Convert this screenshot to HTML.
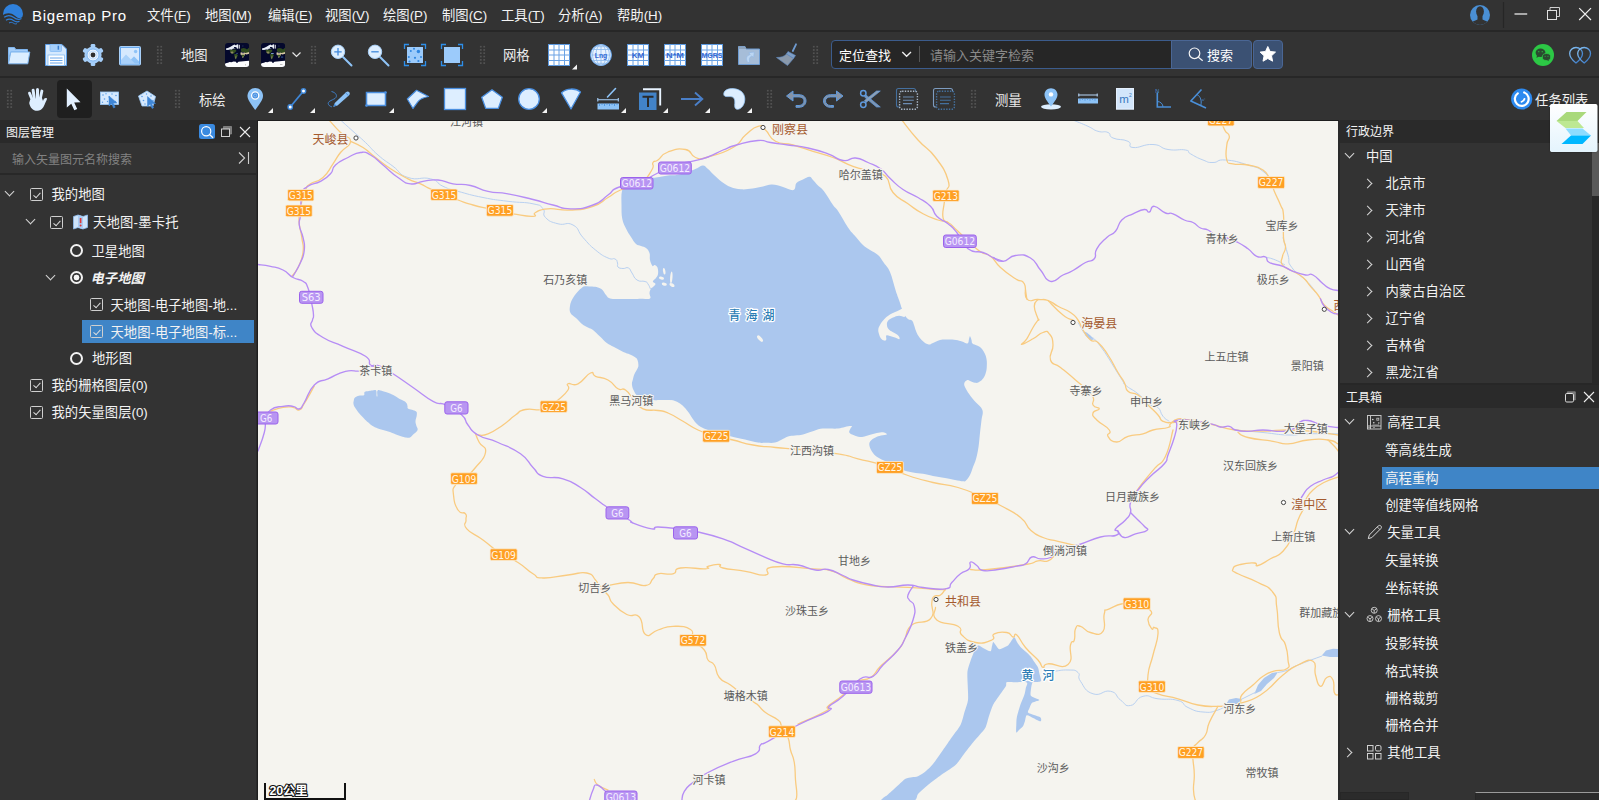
<!DOCTYPE html>
<html lang="zh-CN">
<head>
<meta charset="utf-8">
<title>Bigemap Pro</title>
<style>
*{box-sizing:border-box;margin:0;padding:0}
html,body{width:1599px;height:800px;overflow:hidden;background:#333;}
body{position:relative;font-family:"Liberation Sans","Noto Sans CJK SC",sans-serif;font-size:13px;color:#f2f2f2;}
.abs{position:absolute}
.t{position:absolute;white-space:nowrap;line-height:20px;height:20px;margin-top:-9px}
.sep{position:absolute;left:0;width:1599px;height:2px;background:#272727}
.menu .t{font-size:13.33px;color:#f4f4f4}
.menu u{text-decoration-thickness:1px;text-underline-offset:2px}
.grip{position:absolute;width:7px;height:19.8px;margin-left:-.75px;margin-top:-1.2px;background-image:radial-gradient(circle at center,#626262 0.45px,transparent 0.9px);background-size:3.5px 3.3px}
.lbl{font-size:13.33px;color:#eee}
svg{position:absolute;overflow:visible}
.hdr{position:absolute;background:#2a2a2a;height:21px}
.hdr .t{font-size:12px;color:#f4f4f4}
.tree .t{font-size:13.33px;color:#f2f2f2}
.cb{position:absolute;width:13px;height:13px;border:1px solid #cfcfcf;border-radius:1.5px;margin-top:-7px}
.cb:after{content:"";position:absolute;left:4px;top:1.8px;width:3.2px;height:5.8px;border:solid #dedede;border-width:0 1.1px 1.1px 0;transform:rotate(42deg)}
.rd{position:absolute;width:13px;height:13px;border:2px solid #f2f2f2;border-radius:50%;margin-top:-6.5px}
.rd.on{background:radial-gradient(circle at center,#f6f6f6 2.6px,transparent 3.2px)}
.chv{position:absolute;width:7px;height:7px;border:solid #d6d6d6;border-width:0 1.4px 1.4px 0}
.chv.d{transform:rotate(45deg);margin-top:-6px}
.chv.r{transform:rotate(-45deg);margin-top:-4px}
</style>
</head>
<body>
<!-- TITLE BAR -->
<div class="abs" id="titlebar" style="left:0;top:0;width:1599px;height:30px;background:#333"></div>
<div class="sep" style="top:30px"></div>
<div class="sep" style="top:76px"></div>
<div class="t" style="left:32px;top:15px;font-size:15px;color:#fff;letter-spacing:.75px">Bigemap Pro</div>
<div class="menu">
<div class="t" style="left:147px;top:15px">文件(<u>F</u>)</div>
<div class="t" style="left:205px;top:15px">地图(<u>M</u>)</div>
<div class="t" style="left:268px;top:15px">编辑(<u>E</u>)</div>
<div class="t" style="left:325px;top:15px">视图(<u>V</u>)</div>
<div class="t" style="left:383px;top:15px">绘图(<u>P</u>)</div>
<div class="t" style="left:442px;top:15px">制图(<u>C</u>)</div>
<div class="t" style="left:501px;top:15px">工具(<u>T</u>)</div>
<div class="t" style="left:558px;top:15px">分析(<u>A</u>)</div>
<div class="t" style="left:617px;top:15px">帮助(<u>H</u>)</div>
</div>
<!--TITLE-ICONS-->
<!-- TOOLBAR 1 -->
<div class="grip" style="left:157px;top:46px"></div>
<div class="grip" style="left:311px;top:46px"></div>
<div class="grip" style="left:480px;top:46px"></div>
<div class="grip" style="left:813px;top:46px"></div>
<div class="t lbl" style="left:181px;top:55px">地图</div>
<div class="t lbl" style="left:503px;top:55px">网格</div>
<!-- search -->
<div class="abs" style="left:831px;top:40px;width:421px;height:29px;border:1px solid #3c5c8c;border-radius:4px;background:#262626"></div>
<div class="abs" style="left:1171px;top:40px;width:81px;height:29px;border:1px solid #4a6694;border-radius:0 4px 4px 0;background:#3b5173"></div>
<div class="abs" style="left:1253px;top:40px;width:30px;height:29px;border:1px solid #4a6694;border-radius:4px;background:#3b5173"></div>
<div class="abs" style="left:919px;top:46px;width:1px;height:16px;background:#555"></div>
<div class="t" style="left:839px;top:55px;font-size:13px;color:#fff">定位查找</div>
<div class="t" style="left:930px;top:55px;font-size:13px;color:#8a8a8a">请输入关键字检索</div>
<div class="t" style="left:1207px;top:55px;font-size:13px;color:#fff">搜索</div>
<svg width="1599" height="121" viewBox="0 0 1599 121" style="left:0;top:0" font-family="Liberation Sans, sans-serif">
<defs>
<g id="tri"><path d="M5 0V5H0Z" fill="#f4f4f4"/></g>
<g id="gridic"><rect x="0.5" y="0.5" width="21" height="21" fill="#fdfeff" stroke="#5b98de" stroke-width="1"/><path d="M6 0V22M11 0V22M16.500 0V22M0 6H22M0 11H22M0 16.500H22" stroke="#6aa2e4" stroke-width="1" fill="none"/></g>
</defs>
<!-- logo -->
<circle cx="13" cy="14" r="10" fill="#2f80db"/>
<path d="M2.500 15.500C6 12.500 11 12.500 14.500 15.500S20 19 23 16.500L23.500 22L13 25.500L2 22Z" fill="#333"/>
<path d="M4.200 17.200C7.500 15 10.500 15 13.500 17.300S19 20 21.500 18.500" stroke="#2f80db" stroke-width="1.200" fill="none"/>
<path d="M6 20.300C8.500 18.600 11 18.800 13.500 20.500S17.500 22.300 19.500 21.300" stroke="#2f80db" stroke-width="1.100" fill="none"/>
<path d="M9 23C10.500 22 12 22.200 13.500 23.200S16 24 17 23.600" stroke="#2f80db" stroke-width="1" fill="none"/>
<!-- folder -->
<path d="M8.500 47.500H14.500L15.800 49.500H27.500V52H10.500L8.500 63Z" fill="#a4cdf8" stroke="#7fb5ee" stroke-width="1" stroke-linejoin="round"/>
<path d="M10.800 52H29.800L27.800 63.800H8.500Z" fill="#dceeff" stroke="#7fb5ee" stroke-width="1" stroke-linejoin="round"/>
<!-- save -->
<path d="M45.500 44.500H62L66.500 49V65.500H45.500Z" fill="#d5e9fe" stroke="#5e9fe8" stroke-width="1" stroke-linejoin="round"/>
<rect x="50" y="44.500" width="11.500" height="7" rx="1" fill="#a6cffa" stroke="#86bdf5" stroke-width=".8"/>
<rect x="57.600" y="45.700" width="1.500" height="4" fill="#3b7fd0"/>
<rect x="48" y="55" width="16.500" height="10.500" fill="#ffffff" stroke="#86bdf5" stroke-width=".8"/>
<path d="M50 58H62.500M50 60.500H62.500M50 63H62.500" stroke="#6aa6ea" stroke-width="1"/>
<!-- gear -->
<g transform="translate(93 55)">
<g fill="#a5cef9"><circle r="8.600"/>
<rect x="-2.300" y="-11" width="4.600" height="4.500" rx="1.300"/>
<rect x="-2.300" y="-11" width="4.600" height="4.500" rx="1.300" transform="rotate(60)"/>
<rect x="-2.300" y="-11" width="4.600" height="4.500" rx="1.300" transform="rotate(120)"/>
<rect x="-2.300" y="-11" width="4.600" height="4.500" rx="1.300" transform="rotate(180)"/>
<rect x="-2.300" y="-11" width="4.600" height="4.500" rx="1.300" transform="rotate(240)"/>
<rect x="-2.300" y="-11" width="4.600" height="4.500" rx="1.300" transform="rotate(300)"/></g>
<circle r="6" fill="#e6f2ff" stroke="#7db4f0" stroke-width=".9"/><circle r="4" fill="none" stroke="#b9d9fb" stroke-width=".8"/><circle r="2.400" fill="#2e2e2e"/>
</g>
<!-- image -->
<rect x="119.500" y="46.500" width="21" height="18.500" rx="1" fill="#69a9ee" stroke="#a9d0f8" stroke-width="1"/>
<rect x="121" y="48" width="18" height="15.500" fill="#d6e9fe"/>
<path d="M121 60L126 54.500L131 59.500L134 56.500L139 61.500V63.500H121Z" fill="#a9d1fa"/>
<path d="M131 59.500L134 56.500L139 61.500V63.500H135Z" fill="#8fc3f7"/>
<circle cx="135.600" cy="51.500" r="1.700" fill="#8fc3f7"/>
<!-- map thumbs -->
<g id="thumbs">
<defs><g id="thumb"><rect x="0" y="0" width="24.200" height="24" fill="#04082c"/>
<path d="M1 5.500L3.500 4.800L5.500 3.800L7.500 2.500L9.500 1.500L11 2.500L12 1.200L13.200 1.500V5.500L12 5.800L11.500 4.200L10.500 4.500L10 6L8 5.500L7 6.800L5 6.500L3 7L1 6.800Z" fill="#e9eef6"/>
<rect x="13.800" y="1.800" width=".9" height="3.800" fill="#fff"/><rect x="9" y="4" width="2" height="1.600" fill="#0b1238"/>
<path d="M4.500 7L7 6.800L10.500 6.500L11.500 8L10 9.200L9 10.500L7.500 10.800L6.500 10L5.500 9Z" fill="#35501f"/><path d="M5.200 8.800L8 8.500L8.500 10L7 10.800L5.800 10Z" fill="#8d8a5e"/>
<path d="M9.200 11.300L11.500 11L12.800 12L12.300 13.500L11.500 15L10.800 16.500L10 15.500L9.500 13.500Z" fill="#3a5a22"/><path d="M10 13.500L11.600 13.200L11 16L10.300 15.500Z" fill="#7d7c58"/>
<path d="M16 5.800L18.500 5L20.500 5.500L22 6.500L24.200 4.500V10L21 10.500L19.500 9.500L17 9.800L16 8Z" fill="#2f4a1e"/>
<path d="M15.500 9.500L18.500 9.300L20.500 10L24.200 9V10.800L21.500 11.500L20 11L19.800 12L18.500 14L17.500 14.500L17 12.500L15.500 11.500Z" fill="#d7c7a4"/><path d="M16.300 11.700L19.800 11.800L19 13.600L18.200 14.500L17.500 14.500L17 13Z" fill="#3a5a22"/><path d="M17.500 13.800L18.600 13.600L18 14.800L17.600 14.600Z" fill="#e0c8a8"/>
<rect x="17" y="9.300" width="2" height=".9" fill="#1a2048"/><rect x="11.300" y="10.200" width="1.500" height=".7" fill="#4a6aa0"/><rect x="17" y="2.500" width="1.600" height="1" fill="#1d2a55"/>
<path d="M0 20.800L1.500 20L3 19.800L4.500 19L6.500 19.300L8.500 18.500L11 18.800L11.500 20L12.500 19.800L13.500 18.800L16 18.500L18.500 18.300L21 18L24.200 17.800V24H0Z" fill="#fcfdfe"/>
</g></defs>
<clipPath id="tc1"><rect x="225" y="43" width="24.200" height="24" rx="3"/></clipPath>
<g clip-path="url(#tc1)"><use href="#thumb" x="225" y="43"/><rect x="245" y="64" width=".6" height="1.500" fill="#b8b8a8"/></g>
<clipPath id="tc2"><rect x="261" y="43" width="24.200" height="24" rx="3"/></clipPath>
<g clip-path="url(#tc2)"><use href="#thumb" x="261" y="43"/><rect x="271" y="53" width="2.500" height=".8" fill="#8fb0e0"/><rect x="281" y="56.500" width="2.200" height="1.200" fill="#2c4a85"/><rect x="280" y="64" width="2.500" height=".6" fill="#999"/></g>
</g>
<path d="M292.500 52.500L296.500 56.500L300.500 52.500" stroke="#e6e6e6" stroke-width="1.200" fill="none"/>
<!-- zoom in/out -->
<path d="M343 57L351.500 65.500" stroke="#8fc4f7" stroke-width="2" stroke-linecap="round"/>
<circle cx="338" cy="51.800" r="6.700" fill="#ddeeff" stroke="#a9d1f9" stroke-width="1"/>
<path d="M334.300 51.800H341.700M338 48.100V55.500" stroke="#3f88dc" stroke-width="1.300"/>
<path d="M380 57L388.500 65.500" stroke="#8fc4f7" stroke-width="2" stroke-linecap="round"/>
<circle cx="375" cy="51.800" r="6.700" fill="#ddeeff" stroke="#a9d1f9" stroke-width="1"/>
<path d="M371.300 51.800H378.700" stroke="#3f88dc" stroke-width="1.300"/>
<!-- fit dots -->
<rect x="407" y="47" width="16" height="16" fill="#9ccbfb"/>
<path d="M404.500 49V44.500H409M421 44.500H425.500V49M425.500 61V65.500H421M409 65.500H404.500V61" stroke="#2d8fea" stroke-width="1.300" fill="none"/>
<g fill="#2f86e0"><circle cx="418.400" cy="51.500" r="1.700"/><circle cx="414" cy="48.800" r="1"/><circle cx="410.800" cy="51" r="1"/><circle cx="408.800" cy="57" r="1"/><circle cx="415" cy="57.800" r="1.100"/><circle cx="421" cy="57" r="1"/><circle cx="418.400" cy="61" r="1.100"/><circle cx="409.500" cy="61.500" r="1.100"/></g>
<!-- fit square -->
<rect x="444" y="47" width="16" height="16" fill="#9ccbfb"/>
<path d="M441.500 49V44.500H446M458 44.500H462.500V49M462.500 61V65.500H458M446 65.500H441.500V61" stroke="#2d8fea" stroke-width="1.300" fill="none"/>
<!-- grids -->
<use href="#gridic" x="548" y="44"/><use href="#tri" x="572" y="64.500"/>
<circle cx="601" cy="55" r="10.500" fill="#e9f3ff" stroke="#5b98de" stroke-width="1"/>
<g stroke="#8dbaee" stroke-width=".8" fill="none"><ellipse cx="601" cy="55" rx="5" ry="10.500"/><ellipse cx="601" cy="55" rx="8.500" ry="10.500"/><path d="M601 44.500V65.500M590.500 55H611.500M592 49.500H610M592 60.500H610M595 46.700H607M595 63.300H607"/></g>
<text x="601" y="57.800" font-size="7.500" font-weight="bold" fill="#3268d4" text-anchor="middle" textLength="12.500" lengthAdjust="spacingAndGlyphs">Lng</text>
<use href="#gridic" x="627" y="44"/><text x="638" y="58" font-size="8" fill="#3268d4" text-anchor="middle" textLength="12.5" lengthAdjust="spacingAndGlyphs" font-weight="bold">KM</text>
<use href="#gridic" x="664" y="44"/><text x="675" y="58" font-size="8" fill="#3268d4" text-anchor="middle" textLength="18" lengthAdjust="spacingAndGlyphs" font-weight="bold">N*M</text>
<use href="#gridic" x="701" y="44"/><text x="712" y="58" font-size="7.500" fill="#3268d4" text-anchor="middle" textLength="21" lengthAdjust="spacingAndGlyphs" font-weight="bold">MGRS</text>
<!-- folder arrow disabled -->
<path d="M738.500 46.500H745L746 49H759.500V64.500H738.500Z" fill="#a6bdd8" stroke="#6e9cd2" stroke-width="1" stroke-linejoin="round"/>
<path d="M738.500 46.500H745L746 49H738.500Z" fill="#8ea4bd"/>
<path d="M747.800 62.500C745.300 58.500 746.800 55.300 750.200 54.600L748.900 52.700L754.200 52.100L753.600 57.400L751.900 55.900C749.600 56.800 748.700 59 749.700 62Z" fill="#bcd6f2" stroke="#8db5e4" stroke-width=".5"/>
<!-- broom disabled -->
<path d="M792.800 51L796 44.300" stroke="#6f9bd0" stroke-width="1.800" stroke-linecap="round"/>
<path d="M788 51.500L795.500 55.500L793.500 58.500L786.500 54Z" fill="#7f9fc6" stroke="#5d8cc8" stroke-width=".6"/>
<path d="M786.500 54L793.500 58.500L787.500 65.500L776.500 57.500C781 57.500 784.500 56.500 786.500 54Z" fill="#8a99ab" stroke="#5d8cc8" stroke-width=".6"/>
<!-- search icons -->
<path d="M902.300 52L906.600 56.300L911 52" stroke="#f0f0f0" stroke-width="1.300" fill="none"/>
<circle cx="1194.500" cy="53.300" r="5.300" fill="none" stroke="#f4f4f4" stroke-width="1.200"/><path d="M1198.400 57.200L1202.700 60.800" stroke="#f4f4f4" stroke-width="1.200"/>
<path d="M1267.800 46.500L1270.100 51.500L1275.500 52.100L1271.500 55.800L1272.600 61.200L1267.800 58.500L1263 61.200L1264.100 55.800L1260.100 52.100L1265.500 51.500Z" fill="#fff" stroke="#fff" stroke-width="1" stroke-linejoin="round"/>
<!-- title right -->
<circle cx="1480" cy="15" r="10" fill="#4a8fd4"/>
<clipPath id="uc"><circle cx="1480" cy="15" r="10"/></clipPath>
<g clip-path="url(#uc)" fill="#333"><ellipse cx="1480" cy="11.500" rx="3.900" ry="5.300"/><path d="M1477.500 15H1482.500V19.500C1485.500 21 1488 21.500 1489.500 23.500V27H1470.500V23.500C1472 21.500 1474.500 21 1477.500 19.500Z"/></g>
<path d="M1503.500 2V28" stroke="#262626" stroke-width="1.200"/>
<path d="M1514.500 14H1527.200" stroke="#dcdcdc" stroke-width="1.400"/>
<path d="M1550 10.500V7.500H1559.500V16.500H1556.500" stroke="#cfcfcf" stroke-width="1" fill="none"/><rect x="1547.500" y="10.500" width="9" height="9" stroke="#e0e0e0" stroke-width="1" fill="none"/>
<path d="M1579.200 8.200L1591 20M1591 8.200L1579.200 20" stroke="#efefef" stroke-width="1.200"/>
<!-- wechat -->
<circle cx="1543" cy="55" r="11" fill="#2cc845"/>
<g fill="#2b4a30"><ellipse cx="1540.500" cy="52.800" rx="4.900" ry="4.200"/><path d="M1537 55L1536.500 58L1539.500 56Z"/><ellipse cx="1546.500" cy="57" rx="4.200" ry="3.500" stroke="#2cc845" stroke-width=".8"/><path d="M1548 59L1549 61.300L1546.500 59.800Z"/></g>
<g fill="#2cc845"><circle cx="1538.800" cy="51.700" r=".6"/><circle cx="1542.200" cy="51.700" r=".6"/><circle cx="1545.100" cy="56.200" r=".5"/><circle cx="1548" cy="56.200" r=".5"/></g>
<!-- hearts -->
<defs><linearGradient id="hg" x1="0" y1="0" x2="1" y2="1"><stop offset="0" stop-color="#8cc8fa"/><stop offset="1" stop-color="#2f6fc0"/></linearGradient></defs>
<path d="M1576 63C1571.500 59.500 1569.700 56.500 1569.700 53.500C1569.700 50 1572.500 47.500 1576 47.500C1580 47.500 1582.500 50.500 1582.500 53.500C1582.500 56.500 1580.500 59.500 1576 63Z" fill="none" stroke="url(#hg)" stroke-width="1.300"/>
<path d="M1584.200 63C1579.700 59.500 1577.700 56.500 1577.700 53.500C1577.700 50.500 1580.200 47.500 1584.200 47.500C1587.700 47.500 1590.500 50 1590.500 53.500C1590.500 56.500 1588.700 59.500 1584.200 63Z" fill="none" stroke="url(#hg)" stroke-width="1.300"/>
</svg>

<!-- TOOLBAR 2 -->
<div class="abs" style="left:57px;top:80px;width:35px;height:38px;border-radius:4px;background:#1f1f1f"></div>
<div class="grip" style="left:7px;top:90px"></div>
<div class="grip" style="left:175px;top:90px"></div>
<div class="grip" style="left:767px;top:90px"></div>
<div class="grip" style="left:971px;top:90px"></div>
<div class="t lbl" style="left:199px;top:100px">标绘</div>
<div class="t lbl" style="left:995px;top:100px">测量</div>
<div class="t" style="left:1535px;top:100px;font-size:13.33px;color:#f2f2f2">任务列表</div>
<svg width="1599" height="160" viewBox="0 0 1599 160" style="left:0;top:0" font-family="Liberation Sans, sans-serif">
<defs><g id="tri2"><path d="M5 0V5H0Z" fill="#f4f4f4"/></g></defs>
<!-- hand -->
<g fill="#ddeeff" stroke="none">
<rect x="29.400" y="91.500" width="2.900" height="10" rx="1.450" transform="rotate(-22 30.800 96.500)"/>
<rect x="32.300" y="88.800" width="3" height="12" rx="1.500" transform="rotate(-8 33.800 95)"/>
<rect x="36" y="88" width="3" height="12" rx="1.500"/>
<rect x="39.600" y="89.500" width="2.900" height="11" rx="1.450" transform="rotate(12 41 95)"/>
<path d="M30.200 99.500L41.800 97.500L43 101C43.500 99 45 97.500 46.800 98.200C47.500 99 46 101 45 103.500C43.800 107 42 110.500 37.500 110.800C33 111 30 107.500 29.200 103Z"/>
</g>
<!-- arrow cursor -->
<path d="M66.800 88.600V107.600L71.300 103.700L74.300 110.300L77.200 109L74.200 102.600L80.500 102.200Z" fill="#e2f0ff"/>
<!-- rect select -->
<rect x="100.500" y="92" width="18" height="12.500" fill="#d6e9fe" stroke="#9ccbfb" stroke-width=".8"/>
<g fill="#5a9de6"><circle cx="103" cy="95" r=".8"/><circle cx="106" cy="93.800" r=".7"/><circle cx="104.500" cy="99" r=".8"/><circle cx="109" cy="97" r=".7"/><circle cx="102.500" cy="102.300" r=".7"/><circle cx="112" cy="94" r=".7"/><circle cx="116" cy="95.500" r=".8"/><circle cx="107.500" cy="101.500" r=".7"/><circle cx="115.500" cy="101.500" r=".7"/></g>
<path d="M109 96V106L111.600 103.800L113.600 108L115.200 107.200L113.200 103.200L117 103Z" fill="#3f86d6" stroke="#3f86d6" stroke-width=".5"/>
<!-- polygon select -->
<path d="M138.500 96L147 91L155.500 96.500L153 106H142Z" fill="#d6e9fe" stroke="#9ccbfb" stroke-width=".8"/>
<g fill="#5a9de6"><circle cx="142" cy="96.500" r=".8"/><circle cx="146.500" cy="94" r=".7"/><circle cx="151" cy="96" r=".8"/><circle cx="143.500" cy="100.500" r=".8"/><circle cx="145" cy="104" r=".7"/><circle cx="153" cy="100.500" r=".7"/></g>
<path d="M147.500 96.500V106.500L150.100 104.300L152.100 108.500L153.700 107.700L151.700 103.700L155.500 103.500Z" fill="#3f86d6" stroke="#3f86d6" stroke-width=".5"/>
<!-- pin -->
<path d="M255.200 110C250 103 247.500 99.500 247.500 95.800C247.500 91.400 251 88 255.200 88C259.500 88 263 91.400 263 95.800C263 99.500 260.500 103 255.200 110Z" fill="#8dc3f7"/>
<circle cx="255.200" cy="95.500" r="3.600" fill="#4a90e0" stroke="#fff" stroke-width="1.300"/><circle cx="255.200" cy="95.500" r="1.500" fill="none" stroke="#9ccbfb" stroke-width=".7"/>
<use href="#tri2" x="268" y="108"/>
<!-- line -->
<path d="M290.200 107L303.500 91" stroke="#3f86d6" stroke-width="1.800"/>
<circle cx="303.500" cy="91" r="2.200" fill="#fff" stroke="#3f86d6" stroke-width="1.400"/><circle cx="290.200" cy="107" r="2.200" fill="#fff" stroke="#3f86d6" stroke-width="1.400"/>
<use href="#tri2" x="310" y="108"/>
<!-- pen -->
<path d="M331.500 91.500C336 92.500 338 96 335 98.500C331.500 100.500 327 101.500 328.500 104.500C329.500 106.500 331.500 106.500 332 107" stroke="#3f86d6" stroke-width=".9" fill="none"/>
<path d="M333.300 106.800L334.800 103L346 92.200C347 91.300 348.500 91.300 349.300 92.200C350 93 350 94.300 349.100 95.200L337.500 105.500Z" fill="#8dc3f7"/>
<path d="M333.300 106.800L334.500 103.800L336.500 105.700Z" fill="#3f86d6"/><path d="M345.500 92.800L348.700 95.800" stroke="#3f86d6" stroke-width=".8"/>
<!-- rect -->
<rect x="366.500" y="92.500" width="19" height="13" fill="#ddeeff" stroke="#4a8fe0" stroke-width="1.500"/><circle cx="385.500" cy="92.500" r="1.300" fill="#4a8fe0"/><circle cx="366.500" cy="105.500" r="1.300" fill="#4a8fe0"/>
<use href="#tri2" x="389" y="108"/>
<!-- kite -->
<path d="M407.300 99L416.500 90.300L428.500 96.500C423 97.500 419.500 99.500 417.800 101.800C416 104 414.500 106.500 413 108.500Z" fill="#ddeeff" stroke="#4a8fe0" stroke-width="1.200" stroke-linejoin="round"/>
<!-- square -->
<rect x="444.500" y="88.500" width="21" height="21" fill="#ddeeff" stroke="#4a8fe0" stroke-width="1.300"/>
<!-- pentagon -->
<path d="M492 89.800L502.300 97.200L498.300 108.400H485.700L481.700 97.200Z" fill="#ddeeff" stroke="#4a8fe0" stroke-width="1.300" stroke-linejoin="round"/>
<!-- circle -->
<circle cx="529" cy="99" r="10.300" fill="#ddeeff" stroke="#4a8fe0" stroke-width="1.300"/>
<use href="#tri2" x="542" y="108"/>
<!-- fan -->
<path d="M571 109L561.500 92.800C566.500 88 575.500 87.800 580.500 92Z" fill="#ddeeff" stroke="#4a8fe0" stroke-width="1.300" stroke-linejoin="round"/>
<!-- ruler measure -->
<path d="M607.500 97L615.500 88.500" stroke="#8dc3f7" stroke-width="1.600" stroke-linecap="round"/>
<path d="M597.500 99.800H618.500M597.800 98V101.600M618.300 98V101.600" stroke="#a9d1fa" stroke-width="1.100"/>
<rect x="597.500" y="103.500" width="21.500" height="6" fill="#8dc3f7"/><path d="M599.500 103.500V106M602 103.500V105M604.500 103.500V106M607 103.500V105M609.500 103.500V106M612 103.500V105M614.500 103.500V106M617 103.500V105" stroke="#3f86d6" stroke-width=".7"/>
<use href="#tri2" x="621" y="108"/>
<!-- T -->
<path d="M643 89.200H660.200V105.500" stroke="#e8f3ff" stroke-width="1.900" fill="none"/>
<rect x="639" y="92.500" width="17.500" height="17.500" fill="#4283c8"/>
<path d="M642.500 96.800H653.500M648 96.800V107" stroke="#2a2a2a" stroke-width="2"/>
<use href="#tri2" x="663" y="108"/>
<!-- arrow -->
<path d="M681 99H702M695 92.500L702.300 99L695 105.500" stroke="#4a7fc8" stroke-width="1.900" fill="none"/>
<use href="#tri2" x="705" y="108"/>
<!-- comma blob -->
<path d="M723.800 94.500C723.500 91 727 88.800 731.500 88.600C739 88.300 744.800 92.500 744.800 99C744.800 105 741 109.300 737.500 109.300C734.800 109.300 734.500 106.500 734.800 103.500C735.200 99.500 734 96.800 730.500 96.600C727.500 96.400 724.200 97.300 723.800 94.500Z" fill="#ddeeff" stroke="#9ccbfb" stroke-width=".8"/>
<use href="#tri2" x="747" y="108"/>
<!-- undo / redo -->
<path d="M786.500 96L793 91V94.700H799C803.500 94.700 806 97.500 806 100.800C806 104.300 803.500 107.300 799 107.300H796V105.500H799C802 105.500 804 103.500 804 100.900C804 98.400 802 96.900 799 96.900H793V101Z" fill="#8794a6" stroke="#5f9ade" stroke-width="1" stroke-linejoin="round"/>
<path d="M843 96L836.500 91V94.700H830.500C826 94.700 823.500 97.500 823.500 100.800C823.500 104.300 826 107.300 830.500 107.300H833.500V105.500H830.500C827.500 105.500 825.500 103.500 825.500 100.900C825.500 98.400 827.500 96.900 830.500 96.900H836.500V101Z" fill="#8794a6" stroke="#5f9ade" stroke-width="1" stroke-linejoin="round"/>
<!-- scissors -->
<path d="M866 95L880.300 107H876.500L864.500 97Z" fill="#7e97b6" stroke="#5f9ade" stroke-width=".7"/>
<path d="M866 102.500L880.300 91H876.500L864.500 100.500Z" fill="#8fa1b6" stroke="#5f9ade" stroke-width=".7"/>
<circle cx="863.300" cy="93.300" r="2.700" fill="none" stroke="#5f9ade" stroke-width="1.500"/><circle cx="863.300" cy="104.800" r="2.700" fill="none" stroke="#5f9ade" stroke-width="1.500"/>
<!-- copy icons -->
<rect x="896.500" y="88.500" width="19" height="18.500" rx="2" fill="none" stroke="#45709f" stroke-width="1.100"/>
<rect x="899.600" y="91.200" width="17.800" height="18" rx="2.500" fill="#333" stroke="#a9b7c8" stroke-width="1.400" stroke-dasharray="1.400 1.300"/>
<path d="M903 97H913.800M903 100.300H913.800M903 103.600H912" stroke="#6d8db3" stroke-width="1.100"/>
<rect x="933.500" y="88.500" width="19" height="18.500" rx="2" fill="none" stroke="#7d9cc0" stroke-width="1.100"/>
<rect x="936.600" y="91.200" width="17.800" height="18" rx="2.500" fill="#333" stroke="#44719f" stroke-width="1.400" stroke-dasharray="1.400 1.300"/>
<path d="M940 97H950.800M940 100.300H950.800M940 103.600H949" stroke="#44719f" stroke-width="1.100"/>
<!-- measure: pin+base -->
<ellipse cx="1051" cy="106.800" rx="10" ry="2.600" fill="#ddeeff"/>
<path d="M1051 106.500C1046.800 101 1044.500 98 1044.500 94.600C1044.500 91 1047.400 88.200 1051 88.200C1054.600 88.200 1057.500 91 1057.500 94.600C1057.500 98 1055.200 101 1051 106.500Z" fill="#8dc3f7"/><circle cx="1051" cy="94.400" r="2.200" fill="#fff"/>
<!-- ruler -->
<path d="M1078.500 95H1097.500M1078.800 93.500V96.500M1097.200 93.500V96.500" stroke="#b9d9fb" stroke-width="1"/>
<rect x="1078" y="98.500" width="20" height="5" fill="#8dc3f7"/><path d="M1080 98.500V100.800M1082.500 98.500V100M1085 98.500V100.800M1087.500 98.500V100M1090 98.500V100.800M1092.500 98.500V100M1095 98.500V100.800" stroke="#3f86d6" stroke-width=".6"/>
<!-- m2 -->
<rect x="1116" y="88" width="18" height="21.500" fill="#d3e6fb"/><rect x="1116.500" y="88.500" width="17" height="20.500" fill="none" stroke="#e6f1fe" stroke-width="1"/>
<text x="1124" y="103" font-size="11.500" fill="#3a78c0" text-anchor="middle">m</text><text x="1130.300" y="96.800" font-size="5" fill="#3a78c0" text-anchor="middle">2</text>
<!-- angle N -->
<path d="M1157.300 92.500V107H1171" stroke="#4a8fd8" stroke-width="1.600" fill="none"/><path d="M1157.300 101.500C1160.500 101.500 1163 104 1163 107" stroke="#4a8fd8" stroke-width="1" fill="none"/>
<text x="1157.300" y="92.500" font-size="5.500" fill="#4a8fd8" text-anchor="middle">N</text>
<!-- angle 2 -->
<path d="M1201.500 89.500L1190.800 101L1206 108" stroke="#4a8fd8" stroke-width="1.600" fill="none" stroke-linejoin="round"/><path d="M1197 94.500C1200.500 96.500 1202 100.500 1200.800 105.500" stroke="#4a8fd8" stroke-width="1" fill="none"/>
<text x="1203.800" y="100.500" font-size="3.500" fill="#4a8fd8" text-anchor="middle">a°</text>
<!-- task -->
<circle cx="1521.700" cy="99" r="10.600" fill="#2d8af0"/>
<path d="M1524.200 92.500A6.900 6.900 0 1 1 1517.800 93.300" stroke="#fff" stroke-width="2.200" fill="none" stroke-linecap="round"/>
<path d="M1521.500 101.800C1523 101.500 1524.200 100.300 1524.500 98.800" stroke="#fff" stroke-width="1.800" fill="none" stroke-linecap="round"/>
</svg>


<!-- LEFT PANEL -->
<div class="abs" id="leftpanel" style="left:0;top:121px;width:258px;height:679px;background:#333"></div>
<div class="hdr" style="left:0;top:120px;width:258px;height:22.5px"><div class="t" style="left:6px;top:12px">图层管理</div></div>
<div class="abs" style="left:0;top:173px;width:256px;height:2px;background:#282828"></div>
<div class="t" style="left:12px;top:158.6px;font-size:12px;color:#828282">输入矢量图元名称搜索</div>
<svg width="258" height="120" viewBox="0 120 258 120" style="left:0;top:120px">
<rect x="199" y="124" width="16" height="15" rx="2.500" fill="#3a8ae0"/>
<circle cx="206.200" cy="131.200" r="4.600" fill="none" stroke="#fff" stroke-width="1.200"/><path d="M209.500 134.500L213 137.800" stroke="#fff" stroke-width="1.200"/>
<path d="M223.500 129V126.500H231.500V134H229.500V129Z" fill="#7a7a7a" stroke="#8a8a8a" stroke-width=".8"/><rect x="221.500" y="129" width="8" height="7.500" fill="#2a2a2a" stroke="#d0d0d0" stroke-width="1"/>
<path d="M240 127L250 137M250 127L240 137" stroke="#ededed" stroke-width="1.100"/>
<path d="M239 152.500L244.600 158L239 163.500M248.500 152V164" stroke="#cfcfcf" stroke-width="1.100" fill="none"/>
<!-- map icon -->
<g>
<path d="M73.500 216.500L78 215L83 216.500L87.500 215V227.500L83 229L78 227.500L73.500 229Z" fill="#cfe4fa" stroke="#8fbdf0" stroke-width=".8" stroke-linejoin="round"/>
<path d="M78 215L83 216.500V229L78 227.500Z" fill="#a8cdf5"/>
<path d="M80.600 218V223.200" stroke="#e03a3a" stroke-width="1.700"/><circle cx="80.600" cy="225.400" r="1" fill="#e03a3a"/>
</g>
</svg>

<div class="tree">
<div class="abs" style="left:82px;top:320px;width:172px;height:23px;background:#3f85c7"></div>
<div class="chv d" style="left:6px;top:194px"></div><div class="cb" style="left:30px;top:195px"></div><div class="t" style="left:51.5px;top:193.8px">我的地图</div>
<div class="chv d" style="left:27px;top:222px"></div><div class="cb" style="left:50px;top:223px"></div><div class="t" style="left:93px;top:222.2px;letter-spacing:.2px">天地图-墨卡托</div>
<div class="rd" style="left:69.5px;top:250px"></div><div class="t" style="left:91.5px;top:250.5px">卫星地图</div>
<div class="chv d" style="left:46.5px;top:277.5px"></div><div class="rd on" style="left:69.5px;top:277px"></div><div class="t" style="left:90.5px;top:277.8px;font-weight:bold;font-style:italic">电子地图</div>
<div class="cb" style="left:90px;top:305px"></div><div class="t" style="left:110.5px;top:304.8px">天地图-电子地图-地...</div>
<div class="cb" style="left:90px;top:332px"></div><div class="t" style="left:110.5px;top:331.8px">天地图-电子地图-标...</div>
<div class="rd" style="left:69.5px;top:358px"></div><div class="t" style="left:92px;top:358px">地形图</div>
<div class="cb" style="left:30px;top:385.5px"></div><div class="t" style="left:51.5px;top:385px">我的栅格图层(0)</div>
<div class="cb" style="left:30px;top:412.5px"></div><div class="t" style="left:51.5px;top:412px">我的矢量图层(0)</div>
</div>

<!-- MAP -->
<div class="abs" id="map" style="left:258px;top:121px;width:1080px;height:679px;background:#f5f4ef;overflow:hidden">
<svg width="1080" height="679" viewBox="0 0 1080 679" style="left:0;top:0" font-family="Liberation Sans, Noto Sans CJK SC, sans-serif">
<g fill="#abc7ee" stroke="none">
<path d="M364.0 70.0C364.9 66.2 366.1 66.6 368.0 65.0C369.9 63.4 369.7 63.4 373.5 62.0C377.3 60.6 382.1 59.1 387.0 58.0C391.9 56.9 393.4 57.2 398.0 56.5C402.6 55.8 405.6 55.0 410.0 54.5C414.4 54.0 415.6 54.7 420.0 53.8C424.4 52.9 428.1 51.4 432.0 50.0C435.9 48.6 437.0 48.0 439.6 46.9C442.2 45.8 442.9 44.3 445.0 44.5C447.1 44.7 447.8 46.1 450.0 48.0C452.2 49.9 453.2 51.4 456.0 54.0C458.8 56.6 460.7 58.6 464.0 61.0C467.3 63.4 468.8 64.5 472.6 66.0C476.4 67.5 478.6 68.0 483.0 68.3C487.4 68.6 490.2 68.1 494.6 67.5C499.0 66.9 501.1 66.3 505.0 65.5C508.9 64.7 510.0 63.5 514.0 63.6C518.0 63.7 520.7 64.9 525.0 66.0C529.3 67.1 532.8 69.8 535.5 69.0C538.2 68.2 536.6 64.1 538.5 62.0C540.4 59.9 542.4 59.7 545.0 58.5C547.6 57.3 549.5 55.7 551.5 55.8C553.5 55.9 553.3 57.3 555.0 59.0C556.7 60.7 557.8 62.2 560.0 64.5C562.2 66.8 563.0 66.4 566.0 70.3C569.0 74.2 572.2 80.1 575.0 84.0C577.8 87.9 577.0 85.5 580.0 90.0C583.0 94.5 586.7 101.6 590.0 106.5C593.3 111.4 593.4 110.8 596.4 114.3C599.4 117.8 601.9 121.1 605.0 124.0C608.1 126.9 609.0 127.0 612.0 129.0C615.0 131.0 617.2 131.4 620.0 134.0C622.8 136.6 623.6 138.6 626.0 142.0C628.4 145.4 629.7 145.6 632.0 151.0C634.3 156.4 635.7 163.4 637.5 169.0C639.3 174.6 639.7 175.2 641.0 179.0C642.3 182.8 643.0 185.2 644.0 188.0C645.0 190.8 644.8 191.0 646.0 193.0C647.2 195.0 648.4 196.7 650.0 198.0C651.6 199.3 652.8 198.4 654.0 199.6C655.2 200.8 655.2 201.9 656.0 204.0C656.8 206.1 657.1 207.8 658.0 210.0C658.9 212.2 659.1 212.9 660.5 215.0C661.9 217.1 663.0 218.6 665.0 220.3C667.0 222.0 668.7 223.2 670.7 223.5C672.7 223.8 672.7 222.9 675.0 222.0C677.3 221.1 679.0 219.7 682.0 219.0C685.0 218.3 686.8 218.5 690.0 218.5C693.2 218.5 695.2 218.6 698.0 219.0C700.8 219.4 701.7 219.8 704.0 220.5C706.3 221.2 708.1 223.0 709.5 222.5C710.9 222.0 710.5 219.5 711.0 218.0C711.5 216.5 711.5 215.0 712.0 215.2C712.5 215.4 713.0 217.5 713.5 219.0C714.0 220.5 713.4 221.4 714.5 222.5C715.6 223.6 717.3 223.6 719.0 224.5C720.7 225.4 721.5 225.5 723.0 227.0C724.5 228.5 725.4 229.8 726.5 232.0C727.6 234.2 728.0 235.4 728.5 238.0C729.0 240.6 728.9 242.4 728.8 245.0C728.7 247.6 728.7 248.6 728.0 251.0C727.3 253.4 726.9 255.0 725.5 257.0C724.1 259.0 722.7 260.0 721.0 261.0C719.3 262.0 718.8 262.0 717.0 261.8C715.2 261.6 713.6 260.5 712.0 260.0C710.4 259.5 710.2 258.7 709.0 259.3C707.8 259.9 706.4 261.1 706.2 262.8C706.0 264.5 706.7 265.6 708.0 268.0C709.3 270.4 710.5 272.3 712.5 275.0C714.5 277.7 715.6 278.7 718.0 281.5C720.4 284.3 723.3 285.5 724.4 289.0C725.5 292.5 724.0 294.4 723.5 299.0C723.0 303.6 722.6 306.6 722.0 312.0C721.4 317.4 721.3 320.8 720.5 326.0C719.7 331.2 719.1 334.0 718.0 338.0C716.9 342.0 716.2 342.8 715.0 346.0C713.8 349.2 713.4 351.3 712.0 354.0C710.6 356.7 709.4 358.2 708.0 359.5C706.6 360.8 707.2 360.4 705.0 360.3C702.8 360.2 700.6 359.7 697.0 359.0C693.4 358.3 691.4 357.8 687.0 357.0C682.6 356.2 679.4 355.8 675.0 355.0C670.6 354.2 669.0 353.5 665.0 352.8C661.0 352.1 659.0 352.3 655.0 351.5C651.0 350.7 649.0 350.5 645.0 349.0C641.0 347.5 638.5 345.7 635.0 344.0C631.5 342.3 630.5 341.8 627.5 340.3C624.5 338.8 622.5 338.2 620.0 336.5C617.5 334.8 616.7 334.3 615.0 332.0C613.3 329.7 612.0 327.4 611.5 325.0C611.0 322.6 611.3 321.7 612.5 320.0C613.7 318.3 615.4 317.6 617.5 316.5C619.6 315.4 620.7 315.1 623.0 314.5C625.3 313.9 628.2 314.1 628.8 313.5C629.4 312.9 627.4 311.9 626.0 311.5C624.6 311.1 624.2 311.2 622.0 311.5C619.8 311.8 617.8 312.3 615.0 313.0C612.2 313.7 610.6 314.4 608.0 315.0C605.4 315.6 604.5 316.2 602.0 316.0C599.5 315.8 597.6 314.9 595.5 314.0C593.4 313.1 591.9 312.8 591.3 311.5C590.7 310.2 592.0 308.8 592.5 307.5C593.0 306.2 594.8 305.5 593.7 305.2C592.6 304.9 589.7 305.5 587.0 306.0C584.3 306.5 583.2 307.3 580.0 307.6C576.8 307.9 574.5 307.6 571.0 307.6C567.5 307.6 565.9 307.2 562.5 307.8C559.1 308.4 557.5 309.4 554.0 310.5C550.5 311.6 548.4 312.7 545.0 313.5C541.6 314.3 540.0 314.1 537.0 314.5C534.0 314.9 532.8 314.6 530.0 315.5C527.2 316.4 525.6 317.8 523.0 319.0C520.4 320.2 520.0 321.0 517.0 321.6C514.0 322.2 511.4 321.8 508.0 321.8C504.6 321.8 504.2 322.2 500.0 321.5C495.8 320.8 492.5 319.7 487.0 318.5C481.5 317.3 477.9 316.6 472.5 315.3C467.1 314.0 464.5 313.3 460.0 312.0C455.5 310.7 453.2 310.1 450.0 309.0C446.8 307.9 446.2 307.7 444.0 306.5C441.8 305.3 440.9 304.8 439.0 303.0C437.1 301.2 436.1 299.7 434.5 297.5C432.9 295.3 432.6 294.2 431.0 292.0C429.4 289.8 428.3 288.4 426.5 286.5C424.7 284.6 423.9 283.8 422.0 282.5C420.1 281.2 419.0 280.7 417.0 280.0C415.0 279.3 415.0 279.2 412.0 279.0C409.0 278.8 405.3 279.0 402.0 279.0C398.7 279.0 398.6 279.4 395.6 279.0C392.6 278.6 390.1 277.8 387.0 277.0C383.9 276.2 382.1 276.2 380.0 275.0C377.9 273.8 377.7 273.2 376.5 271.0C375.3 268.8 374.3 266.6 374.0 264.0C373.7 261.4 374.5 260.2 375.0 258.0C375.5 255.8 375.6 255.1 376.5 253.0C377.4 250.9 378.7 249.3 379.5 247.5C380.3 245.7 380.4 245.7 380.4 244.0C380.4 242.3 380.1 240.5 379.5 239.0C378.9 237.5 379.0 237.6 377.5 236.5C376.0 235.4 374.4 234.6 372.0 233.5C369.6 232.4 368.5 232.5 365.3 231.0C362.1 229.5 359.3 227.8 356.0 226.0C352.7 224.2 351.6 224.1 348.8 222.0C346.0 219.9 344.8 218.1 342.0 215.5C339.2 212.9 337.4 210.8 335.0 209.0C332.6 207.2 332.2 207.7 330.0 206.5C327.8 205.3 326.4 204.9 324.0 203.0C321.6 201.1 320.3 199.2 318.0 197.0C315.7 194.8 313.7 194.4 312.5 192.0C311.3 189.6 311.6 187.8 312.0 185.0C312.4 182.2 313.0 180.7 314.4 178.0C315.8 175.3 317.3 173.6 319.0 171.5C320.7 169.4 321.4 168.7 323.0 167.5C324.6 166.3 324.6 165.7 326.8 165.3C329.0 164.9 331.4 165.3 334.0 165.5C336.6 165.7 337.9 165.8 340.0 166.5C342.1 167.2 342.9 167.5 344.5 169.0C346.1 170.5 346.5 172.3 348.0 174.0C349.5 175.7 349.2 176.6 352.0 177.4C354.8 178.2 357.6 177.9 362.0 178.0C366.4 178.1 369.6 178.0 374.0 178.0C378.4 178.0 380.4 177.9 384.0 177.8C387.6 177.7 390.5 178.7 392.0 177.5C393.5 176.3 391.3 174.0 391.5 172.0C391.7 170.0 392.3 168.7 393.0 167.5C393.7 166.3 394.1 166.9 395.0 166.0C395.9 165.1 397.5 164.1 397.5 163.0C397.5 161.9 394.7 161.7 394.8 160.5C394.9 159.3 397.0 158.5 398.0 157.0C399.0 155.5 399.7 155.1 400.0 153.0C400.3 150.9 400.2 148.3 399.5 146.5C398.8 144.7 397.5 144.3 396.5 144.0C395.5 143.7 395.4 146.0 394.5 145.0C393.6 144.0 392.6 141.6 392.0 139.0C391.4 136.4 392.3 134.4 391.5 132.0C390.7 129.6 389.7 128.4 388.0 127.0C386.3 125.6 385.0 125.8 383.0 125.0C381.0 124.2 380.0 124.8 378.0 123.0C376.0 121.2 374.9 118.9 373.0 116.0C371.1 113.1 370.2 112.1 368.5 108.5C366.8 104.9 365.3 102.9 364.3 98.0C363.3 93.1 363.6 89.6 363.5 84.0C363.4 78.4 363.1 73.8 364.0 70.0Z"/>
<path d="M106.6 271.0C107.6 270.1 109.5 270.2 111.0 269.9C112.5 269.6 112.8 269.5 114.2 269.4C115.6 269.3 117.2 268.4 118.1 269.5C119.0 270.6 118.3 273.9 118.6 275.0C118.9 276.1 119.2 276.1 119.4 275.0C119.6 273.9 118.6 270.3 119.7 269.4C120.8 268.5 122.5 269.7 125.0 270.3C127.5 270.9 129.6 271.5 132.0 272.4C134.4 273.3 135.1 273.9 137.0 275.0C138.9 276.1 139.9 276.9 141.7 277.9C143.5 278.9 144.6 279.1 146.0 280.0C147.4 280.9 147.9 281.3 148.6 282.3C149.3 283.3 149.2 284.0 149.5 285.0C149.8 286.0 149.1 286.7 150.0 287.5C150.9 288.3 152.4 288.2 154.0 288.8C155.6 289.4 157.2 289.6 158.2 290.6C159.2 291.6 158.9 292.1 158.8 294.0C158.7 295.9 157.6 297.9 157.5 300.0C157.4 302.1 157.9 302.7 158.3 304.5C158.7 306.3 160.1 307.2 159.6 308.9C159.1 310.6 157.5 311.3 156.0 312.8C154.5 314.3 153.6 315.7 152.0 316.4C150.4 317.1 149.5 316.5 148.0 316.4C146.5 316.3 146.5 316.3 144.5 315.7C142.5 315.1 140.5 314.4 138.0 313.5C135.5 312.6 134.6 311.9 132.0 311.0C129.4 310.1 127.7 309.8 125.0 309.0C122.3 308.2 120.6 307.8 118.3 306.8C116.0 305.8 115.2 305.3 113.5 304.2C111.8 303.1 111.5 302.6 110.0 301.3C108.5 300.0 107.6 299.2 106.0 297.5C104.4 295.8 103.4 294.9 101.8 293.0C100.2 291.1 99.2 289.9 98.0 288.0C96.8 286.1 96.0 285.1 95.6 283.4C95.2 281.7 95.5 280.9 95.8 279.5C96.1 278.1 96.0 277.4 97.0 276.5C98.0 275.6 99.2 275.3 101.0 274.8C102.8 274.3 104.9 275.0 106.0 274.2C107.1 273.4 105.6 271.9 106.6 271.0Z"/>
<path d="M720.0 524.5C721.3 524.1 724.3 526.7 726.0 527.5C727.7 528.3 731.4 530.6 732.5 530.3C733.6 530.0 733.6 526.2 734.0 525.0C734.4 523.8 734.8 521.1 735.3 521.0C735.8 520.9 737.2 523.5 738.0 524.5C738.8 525.5 740.2 528.0 741.3 528.3C742.4 528.6 744.8 527.0 746.0 526.5C747.2 526.0 749.1 525.3 750.0 524.5C750.9 523.7 752.2 521.6 753.0 520.5C753.8 519.4 755.5 516.2 756.3 516.3C757.1 516.4 758.2 519.7 759.0 521.0C759.8 522.3 761.4 524.7 762.5 526.0C763.6 527.3 766.2 529.3 767.5 530.5C768.8 531.7 771.4 534.0 772.5 535.3C773.6 536.6 775.0 539.0 776.0 540.5C777.0 542.0 779.3 544.8 780.0 546.5C780.7 548.2 781.1 551.2 781.5 553.0C781.9 554.8 783.5 558.9 783.0 560.0C782.5 561.1 779.1 560.8 778.0 561.0C776.9 561.2 775.2 560.6 774.5 561.5C773.8 562.4 773.2 566.3 773.0 568.0C772.8 569.7 772.2 573.3 772.7 574.5C773.2 575.7 775.9 576.4 777.0 577.0C778.1 577.6 781.3 578.5 781.3 579.0C781.3 579.5 778.0 580.3 777.0 580.7C776.0 581.1 774.5 581.2 773.8 582.0C773.1 582.8 772.0 585.7 771.5 587.0C771.0 588.3 769.4 590.6 770.0 591.5C770.6 592.4 774.3 593.3 776.0 594.0C777.7 594.7 781.6 595.7 782.5 596.5C783.4 597.3 783.5 600.2 782.5 600.3C781.5 600.4 776.8 597.8 775.0 597.0C773.2 596.2 769.9 593.9 768.8 594.3C767.7 594.7 767.5 598.5 767.0 600.0C766.5 601.5 765.7 604.2 765.0 605.3C764.3 606.4 762.4 607.7 761.5 608.5C760.6 609.3 758.7 612.1 758.3 611.5C757.9 610.9 758.2 606.0 758.3 604.0C758.4 602.0 758.3 599.0 758.8 596.5C759.3 594.0 761.0 588.0 762.0 585.0C763.0 582.0 765.5 576.4 766.3 574.0C767.1 571.6 767.5 568.7 767.8 567.0C768.1 565.3 770.2 562.3 768.8 561.5C767.4 560.7 759.7 561.3 757.0 561.3C754.3 561.3 750.0 560.9 748.8 561.2C747.6 561.5 748.4 562.9 748.2 563.5C748.0 564.1 748.5 564.3 747.5 565.8C746.5 567.3 742.7 572.6 741.0 575.0C739.3 577.4 736.3 581.3 735.0 584.0C733.7 586.7 732.0 592.0 731.0 595.0C730.0 598.0 728.8 604.0 727.5 606.5C726.2 609.0 723.2 612.0 721.5 614.0C719.8 616.0 717.1 619.0 715.0 621.5C712.9 624.0 708.3 630.0 706.0 633.0C703.7 636.0 700.2 641.5 697.5 644.0C694.8 646.5 689.0 649.9 686.0 652.0C683.0 654.1 677.5 658.1 675.0 660.0C672.5 661.9 669.0 664.8 667.0 666.5C665.0 668.2 661.6 671.2 660.0 673.0C658.4 674.8 659.8 679.1 655.0 680.0C650.2 680.9 627.3 680.9 624.0 680.0C620.7 679.1 628.5 675.0 630.0 673.5C631.5 672.0 633.5 670.3 635.0 669.0C636.5 667.7 639.3 665.0 641.0 663.5C642.7 662.0 645.8 658.8 647.5 657.8C649.2 656.8 652.3 656.5 654.0 656.2C655.7 655.9 658.1 656.1 660.0 655.3C661.9 654.5 666.0 651.6 668.0 650.0C670.0 648.4 672.7 645.8 675.0 643.0C677.3 640.2 682.5 632.6 685.0 629.0C687.5 625.4 691.7 619.3 694.0 616.0C696.3 612.7 700.8 607.3 702.5 604.0C704.2 600.7 705.5 594.3 706.5 591.0C707.5 587.7 709.6 582.6 710.0 579.0C710.4 575.4 709.8 567.8 709.7 564.0C709.6 560.2 709.1 553.5 709.5 550.3C709.9 547.1 711.6 542.7 712.5 540.0C713.4 537.3 715.3 532.4 716.3 530.3C717.3 528.2 718.7 524.9 720.0 524.5Z"/>
<polygon points="967.5,584.0 971.0,578.5 978.0,577.0 983.8,578.0 980.0,582.5 973.0,585.3"/>
<polygon points="996.3,573.0 1000.0,564.0 1006.0,557.0 1014.0,552.0 1020.0,551.0 1016.0,557.0 1009.0,563.0 1003.0,570.0"/>
<polygon points="1063.8,534.5 1068.0,529.5 1075.0,527.8 1081.0,528.0 1081.0,536.0 1072.0,536.0"/>
<polygon points="826.5,210.5 829.0,211.8 833.0,215.0 836.0,218.5 833.5,219.0 830.0,217.0 827.0,214.0"/>
</g>
<path fill="#f5f4ef" d="M645.5 188.0C643.9 186.9 641.7 189.1 639.0 190.2C636.3 191.3 634.6 191.8 632.0 193.5C629.4 195.2 628.0 196.4 626.0 198.5C624.0 200.6 623.1 202.0 622.0 204.0C620.9 206.0 620.5 206.7 620.3 208.5C620.1 210.3 620.5 211.2 621.0 213.0C621.5 214.8 622.0 216.2 623.0 217.5C624.0 218.8 625.1 219.4 626.2 219.6C627.3 219.8 627.9 219.5 628.3 218.5C628.7 217.5 627.6 215.2 628.3 214.5C629.0 213.8 630.3 214.6 632.0 215.0C633.7 215.4 635.1 215.9 637.0 216.6C638.9 217.3 640.6 218.6 641.3 218.3C642.0 218.0 641.7 216.3 640.6 215.0C639.5 213.7 637.9 213.0 636.0 211.8C634.1 210.6 632.6 210.3 631.2 208.8C629.8 207.3 629.2 206.3 629.0 204.5C628.8 202.7 628.8 201.4 630.0 199.8C631.2 198.2 632.8 197.5 635.0 196.5C637.2 195.5 638.6 194.9 641.0 194.7C643.4 194.5 646.1 196.8 647.0 195.5C647.9 194.2 647.1 189.1 645.5 188.0Z"/>
<ellipse cx="502.0" cy="217.6" rx="4" ry="1.7" transform="rotate(48 502.0 217.6)" fill="#f5f4ef"/>
<ellipse cx="406.2" cy="150.2" rx="1.2" ry="3.3" transform="rotate(-8 406.2 150.2)" fill="#f5f4ef"/>
<ellipse cx="413.3" cy="156.5" rx="1.2" ry="6.0" transform="rotate(4 413.3 156.5)" fill="#f5f4ef"/>
<ellipse cx="414.0" cy="164.0" rx="2.8" ry="1.6" transform="rotate(30 414.0 164.0)" fill="#f5f4ef"/>
<ellipse cx="403.5" cy="157.2" rx="2.6" ry="1.4" transform="rotate(15 403.5 157.2)" fill="#f5f4ef"/>
<ellipse cx="406.3" cy="163.2" rx="2.6" ry="1.5" transform="rotate(15 406.3 163.2)" fill="#f5f4ef"/>
<g fill="none" stroke="#b9d1f1" stroke-width="1" stroke-linejoin="round">
<path d="M82.5 -1.0C86.0 2.2 88.0 4.0 95.0 10.3C102.0 16.6 100.5 14.9 107.5 21.5C114.5 28.1 112.3 27.3 120.0 34.0C127.7 40.7 126.6 39.0 135.0 45.3C143.4 51.6 139.5 53.0 150.0 56.5C160.5 60.0 162.7 55.3 172.5 57.8C182.3 60.3 177.3 61.8 185.0 65.3C192.7 68.8 188.8 67.2 200.0 70.3C211.2 73.4 211.0 73.7 225.0 76.5C239.0 79.3 236.0 78.5 250.0 80.3C264.0 82.1 265.2 80.7 275.0 82.8C284.8 84.9 281.5 84.0 285.0 87.8C288.5 91.6 283.3 92.3 287.5 96.5C291.7 100.7 292.3 100.7 300.0 102.8C307.7 104.9 308.0 100.2 315.0 104.0C322.0 107.8 318.7 109.5 325.0 116.5C331.3 123.5 330.5 123.3 337.5 129.0C344.5 134.7 344.5 134.5 350.0 137.0C355.5 139.5 354.3 136.6 357.0 138.0C359.7 139.4 358.7 139.8 359.5 142.0C360.3 144.2 358.5 144.5 360.0 146.0C361.5 147.5 362.1 147.2 365.0 147.5C367.9 147.8 368.0 145.7 370.5 147.0C373.0 148.3 371.6 148.6 374.0 152.0C376.4 155.4 375.4 156.6 379.0 159.0C382.6 161.4 383.9 159.4 387.0 160.5C390.1 161.6 388.5 160.9 390.0 163.0C391.5 165.1 391.8 166.6 392.5 168.0"/>
<path d="M815.0 -1.0C819.2 0.8 823.0 2.1 830.0 5.3C837.0 8.5 834.4 8.6 840.0 10.3C845.6 12.0 845.8 9.6 850.0 11.5C854.2 13.4 849.4 14.5 855.0 17.0C860.6 19.5 864.4 17.6 870.0 20.3C875.6 23.0 868.0 25.6 875.0 26.5C882.0 27.4 885.2 22.9 895.0 23.5C904.8 24.1 900.9 27.0 910.0 28.5C919.1 30.0 921.2 27.8 927.5 29.0C933.8 30.2 927.6 30.0 932.5 32.8C937.4 35.6 938.7 36.6 945.0 39.0C951.3 41.4 948.7 41.5 955.0 41.5C961.3 41.5 957.7 38.3 967.5 39.0C977.3 39.7 979.5 40.8 990.0 44.0C1000.5 47.2 998.6 45.5 1005.0 50.3C1011.4 55.1 1010.8 58.0 1013.0 61.0"/>
<path d="M1025.0 116.5C1026.4 121.4 1027.5 125.6 1030.0 134.0C1032.5 142.4 1028.2 138.8 1033.8 146.5C1039.4 154.2 1043.4 154.5 1050.0 161.5C1056.6 168.5 1055.4 168.7 1057.5 171.5"/>
<path d="M1007.5 136.0C1010.3 136.8 1012.0 136.8 1017.5 139.0C1023.0 141.2 1024.3 142.6 1027.0 144.0"/>
<path d="M820.0 201.5C822.8 205.7 824.4 210.8 830.0 216.5C835.6 222.2 830.9 210.8 840.0 222.0C849.1 233.2 854.8 244.7 862.5 256.5C870.2 268.3 862.6 259.4 867.5 264.0C872.4 268.6 873.0 267.2 880.0 272.8C887.0 278.4 886.9 280.2 892.5 284.0C898.1 287.8 896.5 283.3 900.0 286.5C903.5 289.7 901.8 291.4 905.0 295.3C908.2 299.2 909.5 298.9 911.3 300.3"/>
<path d="M977.5 309.0C985.2 309.7 990.3 310.1 1005.0 311.5C1019.7 312.9 1017.4 313.6 1030.0 314.0C1042.6 314.4 1036.0 313.1 1050.0 312.8C1064.0 312.5 1071.6 312.8 1080.0 312.8"/>
<path d="M796.3 550.3C800.1 549.9 803.4 548.7 810.0 549.0C816.6 549.3 816.5 548.3 820.0 551.5C823.5 554.7 818.3 554.3 822.5 560.3C826.7 566.3 826.6 570.0 835.0 572.8C843.4 575.6 844.8 568.6 852.5 570.3C860.2 572.0 856.9 575.0 862.5 579.0C868.1 583.0 866.2 585.5 872.5 584.5C878.8 583.5 877.3 577.2 885.0 575.3C892.7 573.4 890.2 576.6 900.0 577.8C909.8 579.0 911.6 577.1 920.0 579.5C928.4 581.9 923.0 583.3 930.0 586.5C937.0 589.7 936.6 590.3 945.0 591.0C953.4 591.7 952.4 591.5 960.0 589.0C967.6 586.5 968.6 584.0 972.0 582.0"/>
<path d="M982.0 579.0 L998.0 571.0"/>
<path d="M1020.0 551.5C1022.8 550.8 1024.4 551.1 1030.0 549.0C1035.6 546.9 1030.5 547.9 1040.0 544.0C1049.5 540.1 1057.3 537.5 1064.0 535.0"/>
</g>
<g fill="none" stroke="#f9cb80" stroke-width="1.3" stroke-linejoin="round" stroke-linecap="round">
<path d="M71.0 -1.0C74.2 2.5 76.5 5.5 82.5 11.5C88.5 17.5 92.5 14.7 92.5 20.3C92.5 25.9 87.4 25.2 82.5 31.5C77.6 37.8 79.9 35.8 75.0 42.8C70.1 49.8 71.3 50.9 65.0 56.5C58.7 62.1 57.4 59.3 52.5 62.8C47.6 66.3 50.2 63.1 47.5 69.0C44.8 74.9 44.8 75.6 43.0 84.0C41.2 92.4 40.8 89.9 41.0 99.0C41.2 108.1 42.7 107.4 43.8 116.5C44.9 125.6 46.1 123.1 45.0 131.5C43.9 139.9 43.1 139.8 40.0 146.5C36.9 153.2 35.5 152.8 33.8 155.3"/>
<path d="M92.5 20.3C96.0 22.0 98.0 22.0 105.0 26.5C112.0 31.0 109.8 30.5 117.5 36.5C125.2 42.5 123.4 41.8 132.5 47.8C141.6 53.8 141.6 53.6 150.0 57.8C158.4 62.0 155.5 59.7 162.5 62.8C169.5 65.9 164.5 64.5 175.0 69.0C185.5 73.5 188.8 74.8 200.0 79.0C211.2 83.2 206.0 81.5 215.0 84.0C224.0 86.5 220.8 85.5 232.0 88.0C243.2 90.5 243.0 90.8 255.0 92.8C267.0 94.8 268.7 95.7 275.0 95.3C281.3 94.9 273.3 93.6 277.5 91.5C281.7 89.4 280.2 88.5 290.0 87.8C299.8 87.1 299.9 89.7 312.5 89.0C325.1 88.3 324.5 88.8 335.0 85.3C345.5 81.8 342.3 81.1 350.0 76.5C357.7 71.9 353.5 73.1 362.5 69.0C371.5 64.9 373.2 67.6 382.0 62.0C390.8 56.4 390.2 54.7 393.8 49.0C397.4 43.3 393.3 44.3 395.0 41.5C396.7 38.7 395.8 41.9 400.0 39.0C404.2 36.1 402.3 33.9 410.0 31.0C417.7 28.1 419.8 27.0 427.5 28.5C435.2 30.0 431.2 34.4 437.5 36.5C443.8 38.6 439.5 38.8 450.0 36.0C460.5 33.2 464.5 32.7 475.0 26.5C485.5 20.3 480.5 19.9 487.5 14.0C494.5 8.1 494.4 6.7 500.0 5.3C505.6 3.9 502.6 4.8 507.5 9.0C512.4 13.2 509.8 16.1 517.5 20.3C525.2 24.5 524.5 21.2 535.0 24.0C545.5 26.8 543.8 26.8 555.0 30.3C566.2 33.8 563.8 32.3 575.0 36.5C586.2 40.7 584.6 41.5 595.0 45.3C605.4 49.1 602.9 47.2 612.0 50.0C621.1 52.8 621.1 49.3 627.5 55.3C633.9 61.3 628.7 63.8 635.0 71.5C641.3 79.2 641.6 76.8 650.0 82.8C658.4 88.8 656.6 88.3 665.0 92.8C673.4 97.3 673.0 96.6 680.0 99.0C687.0 101.4 684.4 98.3 690.0 101.5C695.6 104.7 691.6 102.6 700.0 110.3C708.4 118.0 710.9 122.0 720.0 129.0C729.1 136.0 726.2 130.4 732.5 135.3C738.8 140.2 735.5 140.2 742.5 146.5C749.5 152.8 750.8 153.2 757.5 157.8C764.2 162.4 763.1 157.2 766.3 162.8C769.5 168.4 765.0 173.4 768.8 177.8C772.6 182.2 774.1 178.0 780.0 178.5C785.9 179.0 784.4 177.6 790.0 179.5C795.6 181.4 793.7 181.9 800.0 185.3C806.3 188.7 806.9 187.7 812.5 191.5C818.1 195.3 816.5 194.1 820.0 199.0C823.5 203.9 821.5 203.4 825.0 209.0C828.5 214.6 828.3 215.5 832.5 219.0C836.7 222.5 835.1 217.3 840.0 221.5C844.9 225.7 844.4 225.6 850.0 234.0C855.6 242.4 855.4 243.8 860.0 251.5C864.6 259.2 863.5 256.2 866.3 261.5C869.1 266.8 866.2 266.8 870.0 270.3C873.8 273.8 874.4 270.2 880.0 274.0C885.6 277.8 884.4 278.4 890.0 284.0C895.6 289.6 895.8 289.4 900.0 294.0C904.2 298.6 900.8 298.2 905.0 300.3C909.2 302.4 908.0 301.9 915.0 301.5C922.0 301.1 919.6 298.6 930.0 299.0C940.4 299.4 938.8 300.2 952.0 303.0C965.2 305.8 962.2 307.0 977.0 309.0C991.8 311.0 990.2 310.0 1005.0 310.0C1019.8 310.0 1016.0 308.9 1030.0 309.0C1044.0 309.1 1041.0 309.1 1055.0 310.5C1069.0 311.9 1073.0 313.0 1080.0 314.0"/>
<path d="M780.0 178.5C779.0 180.4 776.3 179.9 776.3 185.3C776.3 190.7 779.0 194.0 780.0 197.8C781.0 201.6 781.4 196.6 780.0 199.0C778.6 201.4 778.1 201.2 775.0 206.5C771.9 211.8 771.9 213.1 768.8 217.8C765.7 222.5 762.1 223.3 763.8 223.3C765.5 223.3 769.1 221.1 775.0 217.8C780.9 214.5 780.4 212.9 785.0 211.5C789.6 210.1 788.5 209.3 791.3 212.8C794.1 216.3 794.7 216.7 795.0 224.0C795.3 231.3 790.4 232.7 792.5 239.0C794.6 245.3 795.5 240.9 802.5 246.5C809.5 252.1 808.7 251.3 817.5 259.0C826.3 266.7 828.9 267.0 833.8 274.0C838.7 281.0 832.9 280.1 835.0 284.0C837.1 287.9 841.3 285.6 841.3 287.8C841.3 290.0 835.7 288.9 835.0 292.0C834.3 295.1 834.2 294.2 838.8 299.0C843.4 303.8 848.2 304.4 851.3 309.0C854.4 313.6 847.9 311.9 850.0 315.3C852.1 318.7 853.2 321.0 858.8 321.0C864.4 321.0 862.7 317.6 870.0 315.3C877.3 313.0 878.0 314.6 885.0 312.8C892.0 311.0 888.0 310.8 895.0 309.0C902.0 307.2 905.1 308.2 910.0 306.5C914.9 304.8 909.7 305.2 912.5 302.8C915.3 300.4 915.1 298.9 920.0 297.8C924.9 296.7 927.2 298.7 930.0 299.0"/>
<path d="M790.0 179.5C794.2 183.6 798.0 188.5 805.0 194.0C812.0 199.5 812.2 197.6 815.0 199.0"/>
<path d="M643.8 -1.0C648.3 4.6 650.6 8.5 660.0 19.0C669.4 29.5 669.1 25.3 677.5 36.5C685.9 47.7 687.1 49.3 690.0 59.0C692.9 68.7 689.0 64.7 688.0 71.0C687.0 77.3 687.1 74.4 686.3 81.5C685.5 88.6 684.0 90.9 685.0 96.5C686.0 102.1 688.6 100.1 690.0 101.5"/>
<path d="M965.0 5.3C965.7 6.7 965.7 7.5 967.5 10.3C969.3 13.1 970.9 11.5 971.3 15.3C971.7 19.1 969.5 17.4 968.8 24.0C968.1 30.6 967.1 33.7 968.8 39.0C970.5 44.3 969.1 41.4 975.0 42.8C980.9 44.2 981.6 42.3 990.0 44.0C998.4 45.7 998.8 44.8 1005.0 49.0C1011.2 53.2 1008.8 53.0 1012.0 59.0C1015.2 65.0 1013.4 63.3 1016.3 70.3C1019.2 77.3 1019.9 77.4 1022.5 84.0C1025.1 90.6 1024.7 84.9 1025.5 94.0C1026.3 103.1 1024.9 107.4 1025.5 116.5C1026.1 125.6 1027.8 121.2 1027.5 126.5C1027.2 131.8 1025.3 130.4 1024.5 135.3C1023.7 140.2 1021.6 139.8 1024.5 144.0C1027.4 148.2 1029.3 146.8 1035.0 150.3C1040.7 153.8 1040.1 152.3 1045.0 156.5C1049.9 160.7 1048.3 160.4 1052.5 165.3C1056.7 170.2 1056.1 168.8 1060.0 174.0C1063.9 179.2 1062.1 179.4 1066.3 184.0C1070.5 188.6 1071.2 187.5 1075.0 190.3C1078.8 193.1 1078.6 193.0 1080.0 194.0"/>
<path d="M767.5 169.0 L768.8 177.8"/>
<path d="M12.5 290.0C16.0 289.0 18.7 287.3 25.0 286.3C31.3 285.3 30.4 285.6 35.0 286.3C39.6 287.0 38.1 289.9 41.3 288.8C44.5 287.7 42.1 289.2 46.3 282.5C50.5 275.8 53.5 269.9 56.3 265.0"/>
<path d="M220.0 314.0C222.8 313.7 223.0 315.6 230.0 312.8C237.0 310.0 237.3 309.3 245.0 304.0C252.7 298.7 251.2 298.3 257.5 294.0C263.8 289.7 259.2 290.2 267.5 288.5C275.8 286.8 277.9 290.7 287.0 288.0C296.1 285.3 293.6 284.3 300.0 279.0C306.4 273.7 307.2 273.5 310.0 269.0C312.8 264.5 307.2 264.5 310.0 262.8C312.8 261.1 313.7 265.8 320.0 262.8C326.3 259.8 327.6 254.1 332.5 252.0C337.4 249.9 332.6 253.3 337.5 255.3C342.4 257.3 343.7 255.5 350.0 259.0C356.3 262.5 355.1 265.0 360.0 267.8C364.9 270.6 363.0 265.9 367.5 269.0C372.0 272.1 371.1 273.7 376.0 279.0C380.9 284.3 378.3 284.9 385.0 287.8C391.7 290.7 393.0 288.3 400.0 289.5C407.0 290.7 403.0 289.0 410.0 292.0C417.0 295.0 416.6 295.5 425.0 300.3C433.4 305.1 431.0 304.9 440.0 309.0C449.0 313.1 447.2 312.2 457.0 315.0C466.8 317.8 464.4 316.5 475.0 319.0C485.6 321.5 483.1 321.9 495.0 324.0C506.9 326.1 504.3 325.2 517.5 326.5C530.7 327.8 524.5 326.7 542.0 328.5C559.5 330.3 563.8 330.2 580.0 332.8C596.2 335.4 586.8 334.4 600.0 337.8C613.2 341.2 613.0 340.3 627.0 345.0C641.0 349.7 636.6 349.9 650.0 354.5C663.4 359.1 661.0 358.1 675.0 361.5C689.0 364.9 685.4 362.2 700.0 366.5C714.6 370.8 715.1 372.0 727.0 377.0C738.9 382.0 732.6 379.0 742.5 384.5C752.4 390.0 754.1 389.6 762.5 396.5C770.9 403.4 766.2 403.4 772.5 409.0C778.8 414.6 777.3 413.3 785.0 416.5C792.7 419.7 790.2 417.9 800.0 420.3C809.8 422.7 814.4 423.7 820.0 425.0"/>
<path d="M217.5 312.8C218.6 315.2 218.5 316.3 221.3 321.5C224.1 326.7 228.6 324.5 227.5 331.5C226.4 338.5 223.2 339.4 217.5 346.5C211.8 353.6 212.6 352.1 207.0 357.0C201.4 361.9 200.7 359.2 197.5 364.0C194.3 368.8 194.8 367.0 195.5 374.0C196.2 381.0 196.6 383.7 200.0 389.0C203.4 394.3 205.3 390.0 207.5 392.8C209.7 395.6 207.6 394.8 208.0 399.0C208.4 403.2 204.0 402.2 208.8 407.8C213.6 413.4 215.7 412.2 225.0 419.0C234.3 425.8 232.2 425.7 242.0 432.0C251.8 438.3 250.8 435.7 260.0 441.5C269.2 447.3 268.0 448.5 275.0 452.8C282.0 457.1 275.2 456.7 285.0 457.0C294.8 457.3 297.7 455.4 310.0 454.0C322.3 452.6 321.1 450.6 328.8 452.0C336.5 453.4 333.8 455.4 337.5 459.0C341.2 462.6 338.5 463.5 342.0 465.0C345.5 466.5 342.2 465.5 350.0 464.5C357.8 463.5 359.5 461.5 370.0 461.5C380.5 461.5 380.5 465.5 387.5 464.5C394.5 463.5 391.5 461.1 395.0 457.8C398.5 454.5 394.4 454.2 400.0 452.8C405.6 451.4 408.7 454.4 415.0 452.8C421.3 451.2 413.4 448.4 422.5 447.0C431.6 445.6 439.8 448.3 447.5 447.8C455.2 447.3 446.1 446.5 450.0 445.3C453.9 444.1 457.1 443.0 461.3 443.5C465.5 444.0 457.7 445.1 465.0 447.0C472.3 448.9 475.6 448.3 487.5 450.3C499.4 452.3 499.8 455.2 507.5 454.0C515.2 452.8 501.7 447.7 515.0 446.0C528.3 444.3 538.2 446.6 555.0 447.8C571.8 449.0 565.2 447.5 575.0 450.3C584.8 453.1 579.5 453.8 590.0 457.8C600.5 461.8 595.7 462.1 612.5 464.5C629.3 466.9 633.2 465.3 650.0 466.3C666.8 467.3 662.0 467.3 672.5 468.0C683.0 468.7 683.3 468.6 687.5 468.8"/>
<path d="M342.5 467.8C344.6 469.5 346.5 469.8 350.0 474.0C353.5 478.2 349.7 477.3 355.0 482.8C360.3 488.3 361.4 489.8 368.8 493.5C376.2 497.2 376.1 490.4 381.3 496.0C386.5 501.6 382.3 509.9 387.5 513.5C392.7 517.1 392.3 511.3 400.0 509.0C407.7 506.7 405.9 505.4 415.0 505.3C424.1 505.2 426.9 504.7 432.5 508.5C438.1 512.3 431.1 513.3 435.0 519.0C438.9 524.7 442.1 523.4 446.3 529.0C450.5 534.6 447.2 534.8 450.0 539.0C452.8 543.2 453.1 539.1 456.3 544.0C459.5 548.9 456.8 550.9 461.3 556.5C465.8 562.1 466.1 559.4 472.5 564.0C478.9 568.6 477.3 568.1 484.0 573.0C490.7 577.9 491.8 578.4 496.3 581.5C500.8 584.6 496.9 581.2 500.0 584.0C503.1 586.8 501.9 587.3 507.5 591.5C513.1 595.7 515.4 595.1 520.0 599.0C524.6 602.9 521.0 600.4 523.8 605.3C526.6 610.2 527.6 609.9 530.0 616.5C532.4 623.1 530.7 622.0 532.5 629.0C534.3 636.0 534.9 633.1 536.3 641.5C537.7 649.9 536.8 649.9 537.5 659.0C538.2 668.1 538.9 668.1 538.8 674.0C538.7 679.9 537.5 678.3 537.0 680.0"/>
<path d="M687.5 467.8C686.1 469.5 685.6 471.9 682.5 474.0C679.4 476.1 678.7 473.2 676.3 475.3C673.9 477.4 674.9 475.2 673.8 481.5C672.7 487.8 678.1 491.5 672.5 497.8C666.9 504.1 661.1 498.1 653.8 504.0C646.5 509.9 650.5 511.6 646.3 519.0C642.1 526.4 645.5 522.9 638.8 530.3C632.1 537.7 629.9 538.0 622.5 545.3C615.1 552.6 619.4 552.1 612.5 556.5C605.6 560.9 605.7 556.1 598.0 561.0C590.3 565.9 592.8 567.2 585.0 574.0C577.2 580.8 574.5 581.0 570.0 585.3C565.5 589.6 577.4 584.5 569.0 589.5C560.6 594.5 548.1 599.2 540.0 603.0"/>
<path d="M677.5 486.5C677.9 490.0 672.5 493.7 678.8 499.0C685.1 504.3 693.0 501.1 700.0 505.3C707.0 509.5 698.9 509.5 703.8 514.0C708.7 518.5 709.1 520.1 717.5 521.5C725.9 522.9 728.5 521.4 733.8 519.0C739.1 516.6 732.1 514.9 736.3 512.8C740.5 510.7 743.6 510.6 748.8 511.5C754.0 512.4 752.2 515.3 755.0 516.0C757.8 516.7 755.3 511.1 758.8 514.0C762.3 516.9 761.6 519.5 767.5 526.5C773.4 533.5 775.1 533.4 780.0 539.0C784.9 544.6 782.2 545.4 785.0 546.5C787.8 547.6 783.0 543.6 790.0 542.8C797.0 542.0 803.7 548.8 810.0 543.5C816.3 538.2 810.7 530.9 812.5 524.0C814.3 517.1 814.9 523.5 816.3 519.0C817.7 514.5 815.8 511.6 817.5 507.8C819.2 504.0 818.3 504.3 822.5 505.3C826.7 506.3 826.2 510.1 832.5 511.5C838.8 512.9 841.1 515.5 845.0 510.3C848.9 505.1 844.5 499.1 846.3 492.8C848.1 486.5 844.1 490.8 851.3 487.8C858.5 484.8 860.6 481.7 872.0 482.0C883.4 482.3 887.0 484.2 892.0 489.0C897.0 493.8 889.5 493.7 890.0 499.0C890.5 504.3 892.0 505.7 893.8 507.8C895.6 509.9 894.6 505.1 896.3 506.5C898.0 507.9 900.4 505.1 900.0 512.8C899.6 520.5 897.8 522.5 895.0 534.0C892.2 545.5 890.8 544.8 890.0 554.0C889.2 563.2 889.2 561.7 892.0 567.0C894.8 572.3 892.2 569.8 900.0 572.8C907.8 575.8 908.8 574.7 920.0 577.8C931.2 580.9 928.8 581.9 940.0 584.0C951.2 586.1 948.8 585.6 960.0 585.3C971.2 585.0 973.3 586.0 980.0 582.8C986.7 579.6 979.6 579.3 983.8 574.0C988.0 568.7 989.1 569.2 995.0 564.0C1000.9 558.8 999.4 559.1 1005.0 555.3C1010.6 551.5 1008.3 552.4 1015.0 550.3C1021.7 548.2 1024.6 551.0 1028.8 547.8C1033.0 544.6 1030.4 545.7 1030.0 539.0C1029.6 532.3 1029.9 531.7 1027.5 524.0C1025.1 516.3 1023.7 522.0 1021.3 511.5C1018.9 501.0 1020.6 497.7 1018.8 486.5C1017.0 475.3 1020.3 478.5 1015.0 471.5C1009.7 464.5 1009.8 466.7 1000.0 461.5C990.2 456.3 987.0 456.6 980.0 452.8C973.0 449.0 974.3 450.4 975.0 447.8C975.7 445.2 976.5 445.1 982.5 443.5C988.5 441.9 991.4 441.7 996.3 442.0C1001.2 442.3 995.5 445.7 1000.0 444.5C1004.5 443.3 1005.5 441.8 1012.5 437.8C1019.5 433.8 1018.7 437.0 1025.0 430.3C1031.3 423.6 1030.8 422.8 1035.0 414.0C1039.2 405.2 1037.2 406.0 1040.0 399.0C1042.8 392.0 1043.6 391.8 1045.0 389.0"/>
<path d="M712.5 448.5C717.4 448.5 714.6 449.9 730.0 448.5C745.4 447.1 753.5 445.9 767.5 443.5C781.5 441.1 773.7 440.8 780.0 439.8C786.3 438.8 785.1 441.6 790.0 439.8C794.9 438.0 795.4 435.3 797.5 433.5"/>
<path d="M960.0 585.3C957.6 589.8 954.8 593.5 951.3 601.5C947.8 609.5 950.7 608.4 947.5 614.0C944.3 619.6 943.8 617.3 940.0 621.5C936.2 625.7 935.4 624.1 934.0 629.0C932.6 633.9 934.4 632.0 935.0 639.0C935.6 646.0 936.2 645.6 936.3 654.0C936.4 662.4 935.2 661.7 935.5 669.0C935.8 676.3 936.9 676.9 937.5 680.0"/>
<path d="M980.0 582.8C986.3 580.3 989.9 582.1 1002.5 574.0C1015.1 565.9 1014.5 562.4 1025.0 554.0C1035.5 545.6 1031.6 547.8 1040.0 544.0C1048.4 540.2 1050.1 537.5 1055.0 540.3C1059.9 543.1 1055.4 547.0 1057.5 554.0C1059.6 561.0 1059.3 564.6 1062.5 565.3C1065.7 566.0 1065.3 558.3 1068.8 556.5C1072.3 554.7 1072.9 554.8 1075.0 559.0C1077.1 563.2 1074.9 567.3 1076.3 571.5C1077.7 575.7 1079.0 573.3 1080.0 574.0"/>
<path d="M336.3 658.5C337.3 660.0 336.2 661.1 340.0 664.0C343.8 666.9 347.2 667.6 350.0 669.0"/>
<path d="M915.0 309.0C912.9 316.4 912.4 324.8 907.5 335.3C902.6 345.8 903.8 339.2 897.5 346.5C891.2 353.8 890.5 354.6 885.0 361.5C879.5 368.4 880.0 368.3 878.0 371.0"/>
<path d="M980.0 311.5C982.8 312.9 980.2 314.0 990.0 316.5C999.8 319.0 1003.8 318.5 1015.0 320.3C1026.2 322.1 1020.2 323.2 1030.0 322.8C1039.8 322.4 1038.8 320.1 1050.0 319.0C1061.2 317.9 1061.6 317.9 1070.0 319.0C1078.4 320.1 1077.2 321.7 1080.0 322.8"/>
<path d="M1070.0 319.0C1072.1 321.1 1074.7 323.4 1077.5 326.5C1080.3 329.6 1079.3 329.0 1080.0 330.0"/>
<path d="M1080.0 356.0C1076.4 357.4 1074.0 357.4 1067.0 361.0C1060.0 364.6 1060.5 364.0 1055.0 369.0C1049.5 374.0 1051.0 373.4 1047.5 379.0C1044.0 384.6 1043.9 386.2 1042.5 389.0"/>
</g>
<g fill="none" stroke="#b68df5" stroke-width="1.35" stroke-linejoin="round" stroke-linecap="round">
<path d="M745.0 140.3C742.2 139.2 740.6 139.0 735.0 136.5C729.4 134.0 732.0 133.9 725.0 131.5C718.0 129.1 717.3 133.4 710.0 127.8C702.7 122.2 704.4 118.5 698.8 111.5C693.2 104.5 695.6 107.3 690.0 102.8C684.4 98.3 683.7 100.2 678.8 95.3C673.9 90.4 677.8 90.6 672.5 85.3C667.2 80.0 667.7 81.2 660.0 76.5C652.3 71.8 652.7 73.7 645.0 68.5C637.3 63.3 638.8 63.6 632.5 57.8C626.2 52.0 628.8 52.4 622.5 47.8C616.2 43.2 617.0 44.5 610.0 41.5C603.0 38.5 604.5 37.6 597.5 37.0C590.5 36.4 592.7 40.7 585.0 39.5C577.3 38.3 579.8 36.3 570.0 32.8C560.2 29.3 561.2 29.5 550.0 27.0C538.8 24.5 540.5 25.5 530.0 24.0C519.5 22.5 520.9 22.8 512.5 21.5C504.1 20.2 509.1 18.9 500.0 19.5C490.9 20.1 489.8 20.8 480.0 23.5C470.2 26.2 473.4 25.5 465.0 29.0C456.6 32.5 458.7 32.8 450.0 36.0C441.3 39.2 443.0 38.1 433.8 40.3C424.6 42.5 426.5 40.7 417.0 44.0C407.5 47.3 409.6 47.2 399.8 52.0C390.0 56.8 393.1 56.9 382.0 61.0C370.9 65.1 369.0 62.9 360.0 66.5C351.0 70.1 357.0 69.1 350.0 74.0C343.0 78.9 345.5 80.1 335.0 84.0C324.5 87.9 323.7 87.8 312.5 87.8C301.3 87.8 305.5 86.6 295.0 84.0C284.5 81.4 287.6 81.6 275.0 78.5C262.4 75.4 262.6 75.1 250.0 72.8C237.4 70.5 240.5 72.6 230.0 70.3C219.5 68.0 222.3 66.6 212.5 64.5C202.7 62.4 204.1 64.3 195.0 62.8C185.9 61.3 188.4 59.7 180.0 59.0C171.6 58.3 172.7 59.2 165.0 60.3C157.3 61.4 159.5 63.9 152.5 62.8C145.5 61.7 147.7 61.8 140.0 56.5C132.3 51.2 132.7 50.3 125.0 44.0C117.3 37.7 118.8 37.5 112.5 34.0C106.2 30.5 108.8 30.8 102.5 31.5C96.2 32.2 97.0 33.0 90.0 36.5C83.0 40.0 82.4 39.4 77.5 44.0C72.6 48.6 76.7 48.2 72.5 52.8C68.3 57.4 68.8 56.8 62.5 60.3C56.2 63.8 55.2 61.5 50.0 65.3C44.8 69.1 46.1 66.0 44.0 74.0C41.9 82.0 43.3 85.6 42.5 94.0C41.7 102.4 40.6 97.7 41.3 104.0C42.0 110.3 43.6 109.5 45.0 116.5C46.4 123.5 47.0 122.0 46.3 129.0C45.6 136.0 45.7 134.1 42.5 141.5C39.3 148.9 37.1 151.4 35.0 155.3"/>
<path d="M0.0 143.5C3.5 144.0 5.5 143.8 12.5 145.3C19.5 146.8 18.7 145.9 25.0 149.0C31.3 152.1 29.4 153.3 35.0 156.5C40.6 159.7 40.8 157.4 45.0 160.3C49.2 163.2 47.5 160.7 50.0 167.0C52.5 173.3 52.3 175.2 53.8 182.8C55.3 190.4 55.3 189.5 55.5 194.0C55.7 198.5 55.0 195.5 54.5 199.0C54.0 202.5 50.9 201.6 53.8 206.5C56.7 211.4 56.3 211.2 65.0 216.5C73.7 221.8 73.1 220.0 85.0 225.3C96.9 230.6 99.8 230.1 107.5 235.3C115.2 240.5 109.0 241.2 112.5 244.0C116.0 246.8 117.9 244.9 120.0 245.3"/>
<path d="M0.0 330.0C1.8 324.8 4.1 320.2 6.3 311.5C8.5 302.8 6.3 305.3 8.0 299.0C9.7 292.7 7.7 292.8 12.5 289.0C17.3 285.2 18.7 286.3 25.0 285.3C31.3 284.3 30.4 284.6 35.0 285.3C39.6 286.0 38.1 288.9 41.3 287.8C44.5 286.7 42.1 288.2 46.3 281.5C50.5 274.8 49.7 270.6 56.3 264.0C62.9 257.4 61.3 261.6 70.0 257.8C78.7 254.0 78.4 252.5 87.5 250.3C96.6 248.1 95.5 251.2 102.5 249.8C109.5 248.4 106.9 246.6 112.5 245.3C118.1 244.0 116.2 243.2 122.5 245.3C128.8 247.4 125.9 246.9 135.0 252.8C144.1 258.7 143.8 258.8 155.0 266.5C166.2 274.2 165.8 275.4 175.0 280.3C184.2 285.2 179.9 280.2 188.0 284.0C196.1 287.8 197.6 288.4 203.8 294.0C210.0 299.6 205.5 298.4 210.0 304.0C214.5 309.6 211.6 309.1 220.0 314.0C228.4 318.9 228.1 316.2 240.0 321.5C251.9 326.8 252.7 325.8 262.5 332.8C272.3 339.8 268.7 340.2 275.0 346.5C281.3 352.8 276.6 352.1 285.0 355.3C293.4 358.5 294.5 354.7 305.0 357.8C315.5 360.9 313.4 360.9 322.5 366.5C331.6 372.1 329.2 371.8 337.5 377.8C345.8 383.8 342.5 382.1 352.0 388.0C361.5 393.9 364.9 395.1 371.3 399.0C377.7 402.9 368.7 399.5 375.0 402.0C381.3 404.5 386.8 406.7 393.8 407.8C400.8 408.9 392.1 405.9 400.0 406.0C407.9 406.1 410.8 406.6 422.0 408.0C433.2 409.4 428.0 408.3 440.0 411.0C452.0 413.7 453.1 413.8 465.0 417.8C476.9 421.8 471.3 420.4 482.5 425.3C493.7 430.2 493.1 430.4 505.0 435.3C516.9 440.2 515.2 440.4 525.0 442.8C534.8 445.2 530.9 442.3 540.0 444.0C549.1 445.7 549.1 447.7 557.5 449.0C565.9 450.3 562.3 447.0 570.0 448.5C577.7 450.0 578.0 451.6 585.0 454.5C592.0 457.4 587.3 456.5 595.0 459.0C602.7 461.5 602.7 461.5 612.5 463.5C622.3 465.5 619.5 465.9 630.0 466.0C640.5 466.1 640.2 463.9 650.0 464.0C659.8 464.1 654.5 465.4 665.0 466.5C675.5 467.6 679.4 469.2 687.5 467.8C695.6 466.4 689.6 465.7 693.8 461.5C698.0 457.3 697.6 456.6 702.5 452.8C707.4 449.0 708.5 451.1 711.3 447.8C714.1 444.5 710.4 441.9 712.5 441.0C714.6 440.1 715.3 442.1 718.8 444.5C722.3 446.9 719.1 448.4 725.0 449.5C730.9 450.6 730.9 449.7 740.0 448.5C749.1 447.3 749.8 446.9 757.5 445.3C765.2 443.7 762.9 445.4 767.5 442.8C772.1 440.2 769.6 437.4 773.8 436.0C778.0 434.6 777.3 437.7 782.5 437.8C787.7 437.9 788.3 438.4 792.5 436.5C796.7 434.6 789.8 434.5 797.5 431.0C805.2 427.5 807.4 428.2 820.0 424.0C832.6 419.8 832.0 418.7 842.5 416.0C853.0 413.3 852.6 416.1 857.5 414.5C862.4 412.9 860.0 412.2 860.0 410.3C860.0 408.4 855.4 411.0 857.5 407.8C859.6 404.6 863.3 403.6 867.5 399.0C871.7 394.4 871.1 396.4 872.5 391.5C873.9 386.6 870.4 387.8 872.5 381.5C874.6 375.2 874.4 376.3 880.0 369.0C885.6 361.7 885.1 362.6 892.5 355.3C899.9 348.0 901.4 348.8 906.3 342.8C911.2 336.8 907.2 341.4 910.0 334.0C912.8 326.6 913.8 324.9 916.3 316.5C918.8 308.1 918.8 308.5 918.8 304.0C918.8 299.5 917.0 301.3 916.3 300.3"/>
<path d="M860.0 410.3C861.8 412.0 861.4 415.8 866.3 416.5C871.2 417.2 871.2 414.8 877.5 412.8C883.8 410.8 886.3 411.6 888.8 409.5C891.3 407.4 888.8 408.2 886.3 405.3C883.8 402.4 883.9 402.9 880.0 399.0C876.1 395.1 874.6 393.6 872.5 391.5"/>
<path d="M655.0 465.3C653.6 467.7 651.0 470.2 650.0 474.0C649.0 477.8 649.5 475.8 651.3 479.0C653.1 482.2 655.3 479.7 656.3 485.3C657.3 490.9 657.5 490.3 655.0 499.0C652.5 507.7 651.7 508.1 647.5 516.5C643.3 524.9 646.3 521.3 640.0 529.0C633.7 536.7 632.0 536.6 625.0 544.0C618.0 551.4 621.4 551.4 615.0 555.3C608.6 559.2 610.4 552.4 602.0 558.0C593.6 563.6 593.6 567.7 585.0 575.3C576.4 582.9 575.5 581.1 571.3 585.3C567.1 589.5 578.8 585.1 570.0 590.3C561.2 595.5 556.8 595.6 540.0 604.0C523.2 612.4 520.5 614.7 510.0 620.3C499.5 625.9 506.0 620.5 502.5 624.0C499.0 627.5 505.2 628.2 497.5 632.8C489.8 637.4 488.3 635.1 475.0 640.3C461.7 645.5 461.2 645.6 450.0 651.5C438.8 657.4 441.6 656.2 435.0 661.5C428.4 666.8 429.4 665.1 426.3 670.3C423.2 675.5 424.5 677.3 423.8 680.0"/>
<path d="M331.3 680.0C332.3 676.9 332.9 673.5 335.0 669.0C337.1 664.5 335.3 663.6 338.8 664.0C342.3 664.4 345.1 668.5 347.5 670.3"/>
<path d="M916.3 300.3C919.4 299.9 917.4 298.3 927.5 299.0C937.6 299.7 942.7 300.8 952.5 302.8C962.3 304.8 957.2 305.3 962.5 306.0C967.8 306.7 967.1 304.5 971.3 305.3C975.5 306.1 972.3 307.6 977.5 309.0C982.7 310.4 982.3 310.3 990.0 310.3C997.7 310.3 995.2 309.0 1005.0 309.0C1014.8 309.0 1015.9 311.0 1025.0 310.3C1034.1 309.6 1032.9 309.0 1037.5 306.5C1042.1 304.0 1037.8 303.5 1041.3 301.5C1044.8 299.5 1044.8 299.1 1050.0 299.5C1055.2 299.9 1054.4 301.2 1060.0 302.8C1065.6 304.4 1064.4 304.3 1070.0 305.3C1075.6 306.3 1077.2 306.2 1080.0 306.5"/>
<path d="M735.0 136.5C737.8 137.6 738.7 140.9 745.0 140.3C751.3 139.7 749.8 135.4 757.5 134.5C765.2 133.6 765.5 132.9 772.5 137.0C779.5 141.1 776.9 142.5 782.5 149.0C788.1 155.5 786.2 158.9 792.5 160.3C798.8 161.7 798.7 157.0 805.0 154.0C811.3 151.0 808.7 153.0 815.0 149.5C821.3 146.0 821.5 144.8 827.5 141.5C833.5 138.2 833.1 141.6 836.3 137.8C839.5 134.0 835.3 133.8 838.8 127.8C842.3 121.8 843.6 121.4 848.8 116.5C854.0 111.6 853.3 115.2 857.5 110.3C861.7 105.4 858.9 103.9 863.8 99.0C868.7 94.1 868.7 95.7 875.0 92.8C881.3 89.9 881.7 89.0 886.3 88.5C890.9 88.0 888.5 91.9 891.3 91.0C894.1 90.1 891.8 85.0 896.3 85.3C900.8 85.6 902.3 89.9 907.5 92.0C912.7 94.1 909.7 90.8 915.0 92.8C920.3 94.8 920.7 96.6 926.3 99.0C931.9 101.4 930.5 99.3 935.0 101.5C939.5 103.7 938.3 104.9 942.5 107.0C946.7 109.1 945.8 107.0 950.0 109.0C954.2 111.0 952.2 111.8 957.5 114.0C962.8 116.2 962.7 114.9 969.0 117.0C975.3 119.1 974.1 118.5 980.0 121.5C985.9 124.5 984.7 123.9 990.0 127.8C995.3 131.7 993.9 133.0 998.8 135.3C1003.7 137.6 1004.0 134.3 1007.5 136.0C1011.0 137.7 1006.4 138.9 1011.3 141.5C1016.2 144.1 1018.4 142.8 1025.0 145.3C1031.6 147.8 1028.7 147.9 1035.0 150.3C1041.3 152.7 1041.9 153.0 1047.5 154.0C1053.1 155.0 1050.1 151.5 1055.0 154.0C1059.9 156.5 1060.1 158.9 1065.0 162.8C1069.9 166.7 1068.3 165.9 1072.5 167.8C1076.7 169.7 1077.9 169.0 1080.0 169.5"/>
<path d="M1062.5 177.8C1063.6 179.9 1063.1 181.5 1066.3 185.3C1069.5 189.1 1070.0 189.3 1073.8 191.5C1077.6 193.7 1078.3 192.6 1080.0 193.0"/>
<path d="M1080.0 351.5C1078.6 352.6 1079.2 353.2 1075.0 355.3C1070.8 357.4 1071.3 356.2 1065.0 359.0C1058.7 361.8 1058.1 361.1 1052.5 365.3C1046.9 369.5 1048.1 369.5 1045.0 374.0C1041.9 378.5 1043.3 377.3 1041.3 381.5C1039.3 385.7 1038.9 386.9 1038.0 389.0"/>
</g>
<rect x="29.6" y="68.5" width="26.3" height="11.4" rx="1.4" fill="#ff9f22" stroke="#f9ecd8" stroke-width=".8"/>
<text x="42.8" y="78.2" font-family="DejaVu Sans, sans-serif" font-size="10.5" fill="#fff6e6" text-anchor="middle" textLength="24.0" lengthAdjust="spacingAndGlyphs">G315</text>
<rect x="27.6" y="84.0" width="26.6" height="11.7" rx="1.4" fill="#ff9f22" stroke="#f9ecd8" stroke-width=".8"/>
<text x="40.9" y="93.8" font-family="DejaVu Sans, sans-serif" font-size="10.5" fill="#fff6e6" text-anchor="middle" textLength="24.3" lengthAdjust="spacingAndGlyphs">G315</text>
<rect x="172.6" y="68.0" width="26.8" height="11.4" rx="1.4" fill="#ff9f22" stroke="#f9ecd8" stroke-width=".8"/>
<text x="186.0" y="77.7" font-family="DejaVu Sans, sans-serif" font-size="10.5" fill="#fff6e6" text-anchor="middle" textLength="24.5" lengthAdjust="spacingAndGlyphs">G315</text>
<rect x="228.4" y="83.5" width="27.0" height="11.7" rx="1.4" fill="#ff9f22" stroke="#f9ecd8" stroke-width=".8"/>
<text x="241.9" y="93.3" font-family="DejaVu Sans, sans-serif" font-size="10.5" fill="#fff6e6" text-anchor="middle" textLength="24.7" lengthAdjust="spacingAndGlyphs">G315</text>
<rect x="362.5" y="56.5" width="32.5" height="11.5" rx="2.2" fill="#b895f2" stroke="#9b62ec" stroke-width="1"/>
<text x="378.8" y="66.0" font-family="DejaVu Sans, sans-serif" font-size="10" fill="#f4ecff" text-anchor="middle" textLength="30.5" lengthAdjust="spacingAndGlyphs">G0612</text>
<rect x="400.5" y="41.0" width="32.8" height="12.0" rx="2.2" fill="#b895f2" stroke="#9b62ec" stroke-width="1"/>
<text x="416.9" y="50.7" font-family="DejaVu Sans, sans-serif" font-size="10" fill="#f4ecff" text-anchor="middle" textLength="30.5" lengthAdjust="spacingAndGlyphs">G0612</text>
<rect x="685.5" y="114.0" width="32.8" height="12.5" rx="2.2" fill="#b895f2" stroke="#9b62ec" stroke-width="1"/>
<text x="701.9" y="124.0" font-family="DejaVu Sans, sans-serif" font-size="10" fill="#f4ecff" text-anchor="middle" textLength="30.5" lengthAdjust="spacingAndGlyphs">G0612</text>
<rect x="674.6" y="69.0" width="26.6" height="11.4" rx="1.4" fill="#ff9f22" stroke="#f9ecd8" stroke-width=".8"/>
<text x="687.9" y="78.7" font-family="DejaVu Sans, sans-serif" font-size="10.5" fill="#fff6e6" text-anchor="middle" textLength="24.3" lengthAdjust="spacingAndGlyphs">G213</text>
<rect x="949.6" y="-7.0" width="26.6" height="11.9" rx="1.4" fill="#ff9f22" stroke="#f9ecd8" stroke-width=".8"/>
<text x="962.9" y="2.9" font-family="DejaVu Sans, sans-serif" font-size="10.5" fill="#fff6e6" text-anchor="middle" textLength="24.3" lengthAdjust="spacingAndGlyphs">G227</text>
<rect x="999.6" y="55.5" width="27.1" height="11.9" rx="1.4" fill="#ff9f22" stroke="#f9ecd8" stroke-width=".8"/>
<text x="1013.1" y="65.4" font-family="DejaVu Sans, sans-serif" font-size="10.5" fill="#fff6e6" text-anchor="middle" textLength="24.8" lengthAdjust="spacingAndGlyphs">G227</text>
<rect x="41.5" y="170.3" width="23.5" height="12.0" rx="2.2" fill="#b895f2" stroke="#9b62ec" stroke-width="1"/>
<text x="53.2" y="180.0" font-family="DejaVu Sans, sans-serif" font-size="10" fill="#f4ecff" text-anchor="middle" textLength="19.0" lengthAdjust="spacingAndGlyphs">S63</text>
<rect x="-3.5" y="291.0" width="23.5" height="12.0" rx="2.2" fill="#b895f2" stroke="#9b62ec" stroke-width="1"/>
<text x="8.2" y="300.7" font-family="DejaVu Sans, sans-serif" font-size="10" fill="#f4ecff" text-anchor="middle" textLength="12.3" lengthAdjust="spacingAndGlyphs">G6</text>
<rect x="186.8" y="280.8" width="23.2" height="12.2" rx="2.2" fill="#b895f2" stroke="#9b62ec" stroke-width="1"/>
<text x="198.4" y="290.6" font-family="DejaVu Sans, sans-serif" font-size="10" fill="#f4ecff" text-anchor="middle" textLength="12.3" lengthAdjust="spacingAndGlyphs">G6</text>
<rect x="348.0" y="385.8" width="22.8" height="12.2" rx="2.2" fill="#b895f2" stroke="#9b62ec" stroke-width="1"/>
<text x="359.4" y="395.6" font-family="DejaVu Sans, sans-serif" font-size="10" fill="#f4ecff" text-anchor="middle" textLength="12.3" lengthAdjust="spacingAndGlyphs">G6</text>
<rect x="415.5" y="405.8" width="24.0" height="12.2" rx="2.2" fill="#b895f2" stroke="#9b62ec" stroke-width="1"/>
<text x="427.5" y="415.6" font-family="DejaVu Sans, sans-serif" font-size="10" fill="#f4ecff" text-anchor="middle" textLength="12.3" lengthAdjust="spacingAndGlyphs">G6</text>
<rect x="282.1" y="279.8" width="27.1" height="11.6" rx="1.4" fill="#ff9f22" stroke="#f9ecd8" stroke-width=".8"/>
<text x="295.6" y="289.5" font-family="DejaVu Sans, sans-serif" font-size="10.5" fill="#fff6e6" text-anchor="middle" textLength="24.8" lengthAdjust="spacingAndGlyphs">GZ25</text>
<rect x="444.6" y="309.3" width="27.1" height="11.9" rx="1.4" fill="#ff9f22" stroke="#f9ecd8" stroke-width=".8"/>
<text x="458.1" y="319.2" font-family="DejaVu Sans, sans-serif" font-size="10.5" fill="#fff6e6" text-anchor="middle" textLength="24.8" lengthAdjust="spacingAndGlyphs">GZ25</text>
<rect x="618.4" y="340.5" width="27.0" height="11.9" rx="1.4" fill="#ff9f22" stroke="#f9ecd8" stroke-width=".8"/>
<text x="631.9" y="350.4" font-family="DejaVu Sans, sans-serif" font-size="10.5" fill="#fff6e6" text-anchor="middle" textLength="24.7" lengthAdjust="spacingAndGlyphs">GZ25</text>
<rect x="713.4" y="371.5" width="27.0" height="11.9" rx="1.4" fill="#ff9f22" stroke="#f9ecd8" stroke-width=".8"/>
<text x="726.9" y="381.4" font-family="DejaVu Sans, sans-serif" font-size="10.5" fill="#fff6e6" text-anchor="middle" textLength="24.7" lengthAdjust="spacingAndGlyphs">GZ25</text>
<rect x="192.6" y="351.8" width="26.8" height="11.6" rx="1.4" fill="#ff9f22" stroke="#f9ecd8" stroke-width=".8"/>
<text x="206.0" y="361.5" font-family="DejaVu Sans, sans-serif" font-size="10.5" fill="#fff6e6" text-anchor="middle" textLength="24.5" lengthAdjust="spacingAndGlyphs">G109</text>
<rect x="232.1" y="427.8" width="27.1" height="11.6" rx="1.4" fill="#ff9f22" stroke="#f9ecd8" stroke-width=".8"/>
<text x="245.6" y="437.5" font-family="DejaVu Sans, sans-serif" font-size="10.5" fill="#fff6e6" text-anchor="middle" textLength="24.8" lengthAdjust="spacingAndGlyphs">G109</text>
<rect x="421.6" y="513.5" width="26.8" height="11.7" rx="1.4" fill="#ff9f22" stroke="#f9ecd8" stroke-width=".8"/>
<text x="435.0" y="523.3" font-family="DejaVu Sans, sans-serif" font-size="10.5" fill="#fff6e6" text-anchor="middle" textLength="24.5" lengthAdjust="spacingAndGlyphs">G572</text>
<rect x="581.8" y="560.0" width="32.2" height="12.3" rx="2.2" fill="#b895f2" stroke="#9b62ec" stroke-width="1"/>
<text x="597.9" y="569.9" font-family="DejaVu Sans, sans-serif" font-size="10" fill="#f4ecff" text-anchor="middle" textLength="30.5" lengthAdjust="spacingAndGlyphs">G0613</text>
<rect x="510.4" y="604.8" width="27.0" height="11.6" rx="1.4" fill="#ff9f22" stroke="#f9ecd8" stroke-width=".8"/>
<text x="523.9" y="614.5" font-family="DejaVu Sans, sans-serif" font-size="10.5" fill="#fff6e6" text-anchor="middle" textLength="24.7" lengthAdjust="spacingAndGlyphs">G214</text>
<rect x="346.8" y="670.0" width="32.2" height="12.0" rx="2.2" fill="#b895f2" stroke="#9b62ec" stroke-width="1"/>
<text x="362.9" y="679.7" font-family="DejaVu Sans, sans-serif" font-size="10" fill="#f4ecff" text-anchor="middle" textLength="30.5" lengthAdjust="spacingAndGlyphs">G0613</text>
<rect x="865.1" y="476.8" width="27.3" height="11.6" rx="1.4" fill="#ff9f22" stroke="#f9ecd8" stroke-width=".8"/>
<text x="878.8" y="486.5" font-family="DejaVu Sans, sans-serif" font-size="10.5" fill="#fff6e6" text-anchor="middle" textLength="25.0" lengthAdjust="spacingAndGlyphs">G310</text>
<rect x="880.4" y="559.8" width="27.0" height="11.6" rx="1.4" fill="#ff9f22" stroke="#f9ecd8" stroke-width=".8"/>
<text x="893.9" y="569.5" font-family="DejaVu Sans, sans-serif" font-size="10.5" fill="#fff6e6" text-anchor="middle" textLength="24.7" lengthAdjust="spacingAndGlyphs">G310</text>
<rect x="919.6" y="625.5" width="26.6" height="11.9" rx="1.4" fill="#ff9f22" stroke="#f9ecd8" stroke-width=".8"/>
<text x="932.9" y="635.4" font-family="DejaVu Sans, sans-serif" font-size="10.5" fill="#fff6e6" text-anchor="middle" textLength="24.3" lengthAdjust="spacingAndGlyphs">G227</text>
<text x="54.5" y="23.3" font-size="12" fill="#a45a2e" stroke="#f5f4ef" stroke-width="2" paint-order="stroke" stroke-linejoin="round">天峻县</text>
<text x="192.0" y="5.3" font-size="11" fill="#5b5b5b" stroke="#f5f4ef" stroke-width="2" paint-order="stroke" stroke-linejoin="round">江河镇</text>
<text x="285.3" y="163.0" font-size="11" fill="#5b5b5b" stroke="#f5f4ef" stroke-width="2" paint-order="stroke" stroke-linejoin="round">石乃亥镇</text>
<text x="514.0" y="12.6" font-size="12" fill="#a45a2e" stroke="#f5f4ef" stroke-width="2" paint-order="stroke" stroke-linejoin="round">刚察县</text>
<text x="580.8" y="57.5" font-size="11" fill="#5b5b5b" stroke="#f5f4ef" stroke-width="2" paint-order="stroke" stroke-linejoin="round">哈尔盖镇</text>
<text x="1007.5" y="109.3" font-size="11" fill="#5b5b5b" stroke="#f5f4ef" stroke-width="2" paint-order="stroke" stroke-linejoin="round">宝库乡</text>
<text x="947.5" y="121.8" font-size="11" fill="#5b5b5b" stroke="#f5f4ef" stroke-width="2" paint-order="stroke" stroke-linejoin="round">青林乡</text>
<text x="998.8" y="163.0" font-size="11" fill="#5b5b5b" stroke="#f5f4ef" stroke-width="2" paint-order="stroke" stroke-linejoin="round">极乐乡</text>
<text x="101.3" y="254.3" font-size="11" fill="#5b5b5b" stroke="#f5f4ef" stroke-width="2" paint-order="stroke" stroke-linejoin="round">茶卡镇</text>
<text x="351.3" y="284.3" font-size="11" fill="#5b5b5b" stroke="#f5f4ef" stroke-width="2" paint-order="stroke" stroke-linejoin="round">黑马河镇</text>
<text x="532.0" y="333.5" font-size="11" fill="#5b5b5b" stroke="#f5f4ef" stroke-width="2" paint-order="stroke" stroke-linejoin="round">江西沟镇</text>
<text x="823.3" y="207.3" font-size="12" fill="#a45a2e" stroke="#f5f4ef" stroke-width="2" paint-order="stroke" stroke-linejoin="round">海晏县</text>
<text x="946.5" y="239.8" font-size="11" fill="#5b5b5b" stroke="#f5f4ef" stroke-width="2" paint-order="stroke" stroke-linejoin="round">上五庄镇</text>
<text x="1032.8" y="249.3" font-size="11" fill="#5b5b5b" stroke="#f5f4ef" stroke-width="2" paint-order="stroke" stroke-linejoin="round">景阳镇</text>
<text x="811.5" y="273.8" font-size="11" fill="#5b5b5b" stroke="#f5f4ef" stroke-width="2" paint-order="stroke" stroke-linejoin="round">寺寨乡</text>
<text x="872.0" y="284.8" font-size="11" fill="#5b5b5b" stroke="#f5f4ef" stroke-width="2" paint-order="stroke" stroke-linejoin="round">申中乡</text>
<text x="920.0" y="308.0" font-size="11" fill="#5b5b5b" stroke="#f5f4ef" stroke-width="2" paint-order="stroke" stroke-linejoin="round">东峡乡</text>
<text x="1025.8" y="312.3" font-size="11" fill="#5b5b5b" stroke="#f5f4ef" stroke-width="2" paint-order="stroke" stroke-linejoin="round">大堡子镇</text>
<text x="965.0" y="348.8" font-size="11" fill="#5b5b5b" stroke="#f5f4ef" stroke-width="2" paint-order="stroke" stroke-linejoin="round">汉东回族乡</text>
<text x="847.0" y="379.8" font-size="11" fill="#5b5b5b" stroke="#f5f4ef" stroke-width="2" paint-order="stroke" stroke-linejoin="round">日月藏族乡</text>
<text x="1033.3" y="387.6" font-size="12" fill="#a45a2e" stroke="#f5f4ef" stroke-width="2" paint-order="stroke" stroke-linejoin="round">湟中区</text>
<text x="320.3" y="470.5" font-size="11" fill="#5b5b5b" stroke="#f5f4ef" stroke-width="2" paint-order="stroke" stroke-linejoin="round">切吉乡</text>
<text x="580.0" y="443.5" font-size="11" fill="#5b5b5b" stroke="#f5f4ef" stroke-width="2" paint-order="stroke" stroke-linejoin="round">甘地乡</text>
<text x="527.0" y="493.5" font-size="11" fill="#5b5b5b" stroke="#f5f4ef" stroke-width="2" paint-order="stroke" stroke-linejoin="round">沙珠玉乡</text>
<text x="687.0" y="484.6" font-size="12" fill="#a45a2e" stroke="#f5f4ef" stroke-width="2" paint-order="stroke" stroke-linejoin="round">共和县</text>
<text x="687.0" y="530.5" font-size="11" fill="#5b5b5b" stroke="#f5f4ef" stroke-width="2" paint-order="stroke" stroke-linejoin="round">铁盖乡</text>
<text x="465.8" y="579.3" font-size="11" fill="#5b5b5b" stroke="#f5f4ef" stroke-width="2" paint-order="stroke" stroke-linejoin="round">塘格木镇</text>
<text x="785.0" y="433.8" font-size="11" fill="#5b5b5b" stroke="#f5f4ef" stroke-width="2" paint-order="stroke" stroke-linejoin="round">倒淌河镇</text>
<text x="1013.3" y="420.0" font-size="11" fill="#5b5b5b" stroke="#f5f4ef" stroke-width="2" paint-order="stroke" stroke-linejoin="round">上新庄镇</text>
<text x="1041.3" y="496.3" font-size="11" fill="#5b5b5b" stroke="#f5f4ef" stroke-width="2" paint-order="stroke" stroke-linejoin="round">群加藏族乡</text>
<text x="965.3" y="591.8" font-size="11" fill="#5b5b5b" stroke="#f5f4ef" stroke-width="2" paint-order="stroke" stroke-linejoin="round">河东乡</text>
<text x="434.5" y="662.5" font-size="11" fill="#5b5b5b" stroke="#f5f4ef" stroke-width="2" paint-order="stroke" stroke-linejoin="round">河卡镇</text>
<text x="778.8" y="651.0" font-size="11" fill="#5b5b5b" stroke="#f5f4ef" stroke-width="2" paint-order="stroke" stroke-linejoin="round">沙沟乡</text>
<text x="987.5" y="655.5" font-size="11" fill="#5b5b5b" stroke="#f5f4ef" stroke-width="2" paint-order="stroke" stroke-linejoin="round">常牧镇</text>
<text x="1075.5" y="189.3" font-size="12" fill="#a45a2e" stroke="#f5f4ef" stroke-width="2" paint-order="stroke" stroke-linejoin="round">西宁市</text>
<circle cx="98.0" cy="17.0" r="2.1" fill="#fff" stroke="#444" stroke-width="1"/>
<circle cx="505.0" cy="6.5" r="2.1" fill="#fff" stroke="#444" stroke-width="1"/>
<circle cx="815.0" cy="201.5" r="2.1" fill="#fff" stroke="#444" stroke-width="1"/>
<circle cx="1025.5" cy="381.5" r="2.1" fill="#fff" stroke="#444" stroke-width="1"/>
<circle cx="678.0" cy="478.5" r="2.1" fill="#fff" stroke="#444" stroke-width="1"/>
<circle cx="1066.3" cy="188.3" r="2.1" fill="#fff" stroke="#444" stroke-width="1"/>
<text x="470.5" y="198.8" font-size="12" fill="#2b7db5" stroke="#fff" stroke-width="2.4" paint-order="stroke" stroke-linejoin="round" font-weight="500">青</text>
<text x="487.5" y="198.8" font-size="12" fill="#2b7db5" stroke="#fff" stroke-width="2.4" paint-order="stroke" stroke-linejoin="round" font-weight="500">海</text>
<text x="504.5" y="198.8" font-size="12" fill="#2b7db5" stroke="#fff" stroke-width="2.4" paint-order="stroke" stroke-linejoin="round" font-weight="500">湖</text>
<text x="763.5" y="558.8" font-size="12" fill="#2b7db5" stroke="#fff" stroke-width="2.4" paint-order="stroke" stroke-linejoin="round" font-weight="500">黄</text>
<text x="784.5" y="558.8" font-size="12" fill="#2b7db5" stroke="#fff" stroke-width="2.4" paint-order="stroke" stroke-linejoin="round" font-weight="500">河</text>
<path d="M7.0 662.0 V678.0 H87.0 V662.0" fill="none" stroke="#111" stroke-width="2"/>
<text x="11.5" y="673.6" font-size="12.5" font-weight="bold" fill="#fff" stroke="#111" stroke-width="2.2" paint-order="stroke" stroke-linejoin="round" letter-spacing="-.3">20公里</text>
</svg>
</div>
<div class="abs" style="left:257px;top:120px;width:1082px;height:1px;background:#1e1e1e"></div><div class="abs" style="left:257.2px;top:120px;width:.8px;height:680px;background:#1e1e1e"></div><div class="abs" style="left:256px;top:142px;width:1.2px;height:658px;background:#2a2a2a"></div>

<!-- RIGHT PANEL -->
<div class="abs" id="rightpanel" style="left:1338px;top:121px;width:261px;height:679px;background:#333;border-left:2px solid #2a2a2a"></div>
<div class="hdr" style="left:1340px;top:120px;width:259px;height:22.5px"><div class="t" style="left:6px;top:11px">行政边界</div></div>
<div class="hdr" style="left:1340px;top:385px;width:259px;height:22.5px"><div class="t" style="left:6px;top:11.5px">工具箱</div></div>
<div class="abs" style="left:1340px;top:383px;width:259px;height:2px;background:#272727"></div>
<div class="abs" style="left:1592px;top:142px;width:7px;height:242px;background:#282828"></div>
<div class="abs" style="left:1592px;top:142.5px;width:7px;height:53.5px;background:#595959"></div>
<div class="tree">
<div class="chv d" style="left:1346px;top:156px"></div><div class="t" style="left:1366px;top:156px">中国</div>
<div class="chv r" style="left:1364px;top:183.5px"></div><div class="t" style="left:1385.5px;top:182.7px">北京市</div>
<div class="chv r" style="left:1364px;top:210.5px"></div><div class="t" style="left:1385.5px;top:209.7px">天津市</div>
<div class="chv r" style="left:1364px;top:237.5px"></div><div class="t" style="left:1385.5px;top:236.7px">河北省</div>
<div class="chv r" style="left:1364px;top:264.5px"></div><div class="t" style="left:1385.5px;top:263.7px">山西省</div>
<div class="chv r" style="left:1364px;top:291.5px"></div><div class="t" style="left:1385.5px;top:290.7px">内蒙古自治区</div>
<div class="chv r" style="left:1364px;top:318.5px"></div><div class="t" style="left:1385.5px;top:317.7px">辽宁省</div>
<div class="chv r" style="left:1364px;top:345.5px"></div><div class="t" style="left:1385.5px;top:344.7px">吉林省</div>
<div class="chv r" style="left:1364px;top:372.5px;"></div><div class="t" style="left:1385.5px;top:371.7px;height:20px;overflow:hidden">黑龙江省</div>
</div>
<div class="tree">
<div class="abs" style="left:1382px;top:467px;width:217px;height:22px;background:#3f85c7"></div>
<div class="chv d" style="left:1346px;top:422px"></div><div class="t" style="left:1387.3px;top:421.7px">高程工具</div>
<div class="t" style="left:1385.3px;top:450px">等高线生成</div>
<div class="t" style="left:1385.3px;top:477.5px">高程重构</div>
<div class="t" style="left:1385.3px;top:505px">创建等值线网格</div>
<div class="chv d" style="left:1346px;top:532px"></div><div class="t" style="left:1387.3px;top:531.7px">矢量工具</div>
<div class="t" style="left:1385.3px;top:560px">矢量转换</div>
<div class="t" style="left:1385.3px;top:587.5px">坐标转换</div>
<div class="chv d" style="left:1346px;top:615px"></div><div class="t" style="left:1387.3px;top:614.7px">栅格工具</div>
<div class="t" style="left:1385.3px;top:643px">投影转换</div>
<div class="t" style="left:1385.3px;top:670.5px">格式转换</div>
<div class="t" style="left:1385.3px;top:697.5px">栅格裁剪</div>
<div class="t" style="left:1385.3px;top:725px">栅格合并</div>
<div class="chv r" style="left:1344px;top:752.5px"></div><div class="t" style="left:1387.3px;top:751.7px">其他工具</div>
</div>
<svg width="261" height="680" viewBox="1338 120 261 680" style="left:1338px;top:120px">
<!-- toolbox header icons -->
<path d="M1567.300 393.500V391.800H1575.300V400H1573.500V393.500Z" fill="#777" stroke="#8a8a8a" stroke-width=".7"/><rect x="1565.500" y="393.500" width="8" height="8.500" rx="1.300" fill="#2a2a2a" stroke="#dcdcdc" stroke-width="1"/>
<path d="M1584 392L1594 402M1594 392L1584 402" stroke="#ededed" stroke-width="1.100"/>
<!-- elevation icon -->
<g stroke="#c4c4c4" fill="none" stroke-width="1"><rect x="1367.500" y="415.500" width="13.500" height="13.500"/><path d="M1370.500 415.500V429M1367.500 426H1381"/><rect x="1376.800" y="418.200" width="2" height="2" stroke-width=".8"/></g>
<g fill="#dcdcdc"><circle cx="1372.800" cy="419.500" r=".8"/><circle cx="1373.800" cy="422.800" r=".8"/><circle cx="1378.800" cy="423" r=".7"/><circle cx="1369" cy="427.600" r=".7"/><circle cx="1374" cy="427.400" r=".6"/></g>
<path d="M1372.500 425H1379" stroke="#b4b4b4" stroke-width=".8"/>
<!-- pencil -->
<path d="M1368.300 538.600L1369.300 535L1378.200 526C1379 525.200 1380.200 525.200 1380.900 526C1381.600 526.700 1381.600 527.800 1380.800 528.600L1371.800 537.600Z" fill="none" stroke="#dadada" stroke-width="1" stroke-linejoin="round"/><path d="M1377.300 527L1379.800 529.500" stroke="#dadada" stroke-width=".8"/>
<!-- cubes -->
<g fill="none" stroke="#d0d0d0" stroke-width=".9"><circle cx="1374.200" cy="610.300" r="3"/><circle cx="1370" cy="618.600" r="3"/><circle cx="1378.500" cy="618.600" r="3"/><path d="M1372 608.800L1374.200 610.500L1376.400 608.800M1374.200 610.500V613M1367.800 617.200L1370 618.900L1372.200 617.200M1370 618.900V621.400M1376.300 617.200L1378.500 618.900L1380.700 617.200M1378.500 618.900V621.400"/></g>
<!-- squares -->
<g fill="none" stroke="#d0d0d0" stroke-width="1"><rect x="1367.500" y="745.500" width="5.500" height="5.500"/><rect x="1375.500" y="745.500" width="5.500" height="5.500" rx="1.500"/><rect x="1367.500" y="753.500" width="5.500" height="5.500"/><rect x="1375.500" y="753.500" width="5.500" height="5.500"/></g>
</svg>

<div class="abs" style="left:1340px;top:792px;width:69px;height:8px;background:#2b2b2b;border:1px solid #272727"></div>
<div class="abs" style="left:1475px;top:792px;width:124px;height:8px;background:#2b2b2b;border-top:1px solid #9a9a9a;border-left:1px solid #272727"></div>
<!-- floating logo -->
<div class="abs" id="float" style="left:1549.5px;top:104px;width:47.5px;height:48px;background:#fafafa;border-radius:3px;box-shadow:0 0 2px rgba(0,0,0,.4)"></div>
<svg width="48" height="48" viewBox="1549.500 104 48 48" style="left:1549.500px;top:104px">
<defs><linearGradient id="fg" x1="0" y1="0" x2="0" y2="1"><stop offset="0" stop-color="#ffffff"/><stop offset="1" stop-color="#e4f4fd"/></linearGradient></defs>
<rect x="1549.500" y="104" width="47.500" height="48" rx="2" fill="url(#fg)"/>
<path d="M1566 112H1586L1577 121H1556Z" fill="#a9d97b"/><path d="M1556 121H1577L1583.500 128H1565Z" fill="#bde892"/>
<path d="M1565 128.500H1582L1590.500 135.500H1570.500Z" fill="#8ddcff"/><path d="M1570.500 135.500H1590.500L1582 144H1561Z" fill="#00b7ff"/>
</svg>

</body>
</html>
